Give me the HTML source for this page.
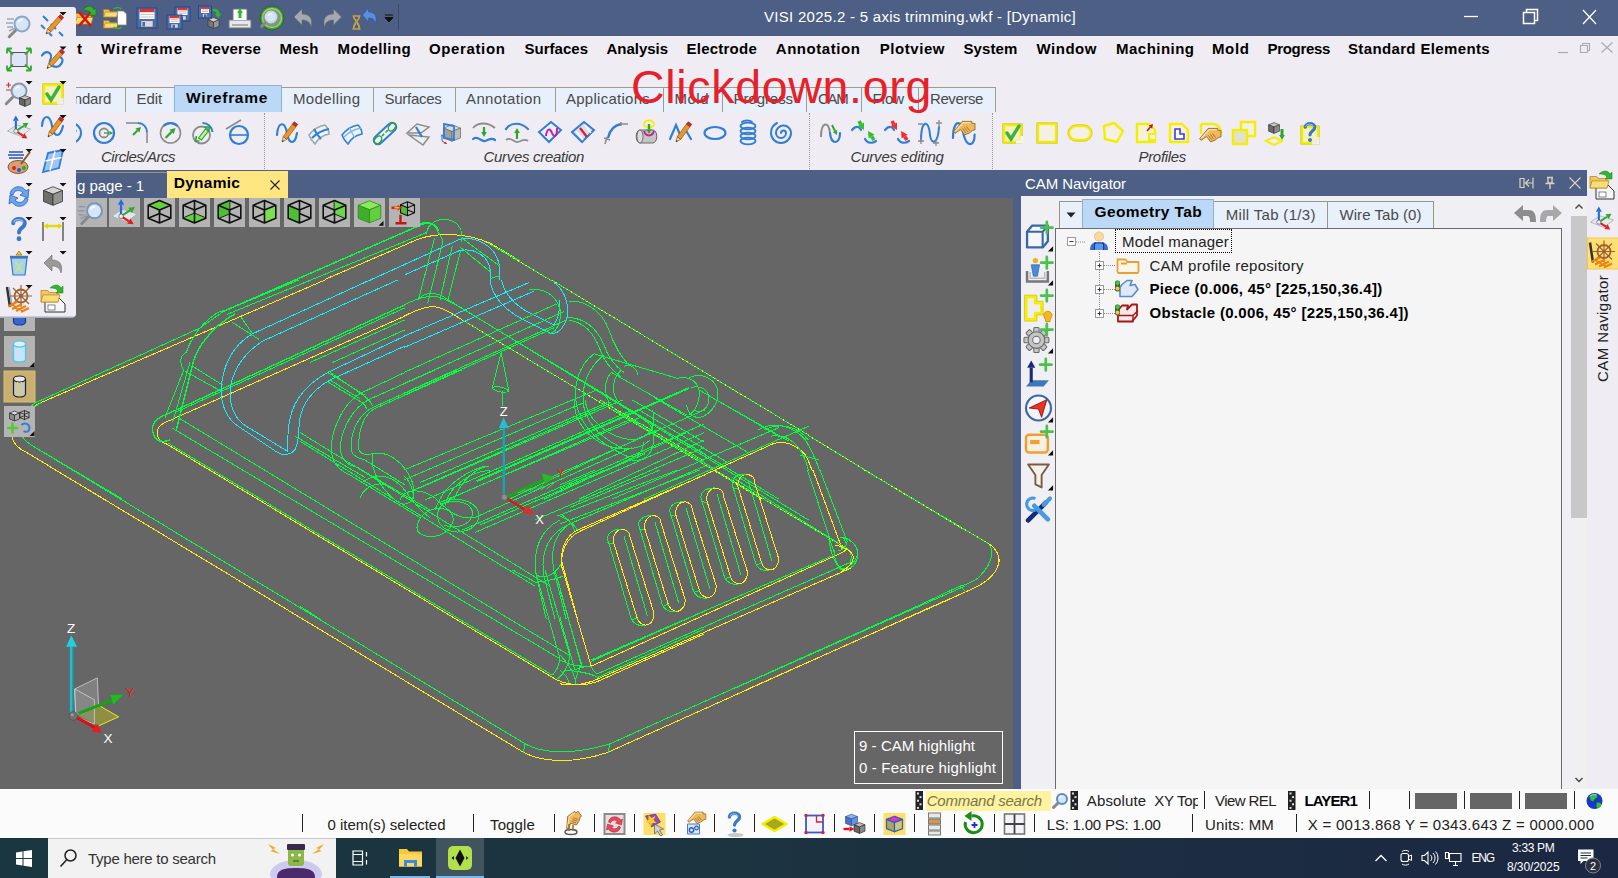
<!DOCTYPE html>
<html><head><meta charset="utf-8"><title>VISI 2025.2 - 5 axis trimming.wkf - [Dynamic]</title>
<style>
html,body{margin:0;padding:0;width:1618px;height:878px;overflow:hidden;background:#666;}
body{font-family:"Liberation Sans",sans-serif;position:relative;}
.t{position:absolute;white-space:nowrap;margin:0;padding:0;}
.r{position:absolute;margin:0;padding:0;}
svg{overflow:visible;}
</style></head><body>
<div class="r" style="left:0px;top:0px;width:1618px;height:36px;background:#4d5f84;"></div>
<div class="t" style="left:764.00px;top:6.80px;font-size:15px;line-height:20px;letter-spacing:0.283px;color:#fff;">VISI 2025.2 - 5 axis trimming.wkf - [Dynamic]</div>
<svg class="r" style="left:1455px;top:0px;" width="163" height="36" viewBox="0 0 163 36"><path d="M9 16.5h14" stroke="#fff" stroke-width="1.3" fill="none"/><path d="M68.5 12.5h11v11h-11z M71.5 12.5v-3h11v11h-3" stroke="#fff" stroke-width="1.5" fill="none"/><path d="M128 10l13 14M141 10l-13 14" stroke="#fff" stroke-width="1.3" fill="none"/></svg>
<div class="r" style="left:0px;top:36px;width:1618px;height:134px;background:#efedf3;"></div>
<div class="t" style="left:52.00px;top:38.80px;font-size:15px;line-height:20px;letter-spacing:0.542px;font-weight:bold;">Edit</div>
<div class="t" style="left:101.00px;top:38.80px;font-size:15px;line-height:20px;letter-spacing:0.975px;font-weight:bold;">Wireframe</div>
<div class="t" style="left:201.50px;top:38.80px;font-size:15px;line-height:20px;letter-spacing:0.160px;font-weight:bold;">Reverse</div>
<div class="t" style="left:279.50px;top:38.80px;font-size:15px;line-height:20px;letter-spacing:0.227px;font-weight:bold;">Mesh</div>
<div class="t" style="left:337.50px;top:38.80px;font-size:15px;line-height:20px;letter-spacing:0.390px;font-weight:bold;">Modelling</div>
<div class="t" style="left:429.00px;top:38.80px;font-size:15px;line-height:20px;letter-spacing:0.629px;font-weight:bold;">Operation</div>
<div class="t" style="left:524.50px;top:38.80px;font-size:15px;line-height:20px;letter-spacing:0.016px;font-weight:bold;">Surfaces</div>
<div class="t" style="left:606.50px;top:38.80px;font-size:15px;line-height:20px;letter-spacing:-0.025px;font-weight:bold;">Analysis</div>
<div class="t" style="left:686.50px;top:38.80px;font-size:15px;line-height:20px;letter-spacing:0.238px;font-weight:bold;">Electrode</div>
<div class="t" style="left:775.75px;top:38.80px;font-size:15px;line-height:20px;letter-spacing:0.560px;font-weight:bold;">Annotation</div>
<div class="t" style="left:879.75px;top:38.80px;font-size:15px;line-height:20px;letter-spacing:0.550px;font-weight:bold;">Plotview</div>
<div class="t" style="left:963.50px;top:38.80px;font-size:15px;line-height:20px;letter-spacing:0.106px;font-weight:bold;">System</div>
<div class="t" style="left:1036.50px;top:38.80px;font-size:15px;line-height:20px;letter-spacing:0.525px;font-weight:bold;">Window</div>
<div class="t" style="left:1116.00px;top:38.80px;font-size:15px;line-height:20px;letter-spacing:0.482px;font-weight:bold;">Machining</div>
<div class="t" style="left:1212.00px;top:38.80px;font-size:15px;line-height:20px;letter-spacing:0.628px;font-weight:bold;">Mold</div>
<div class="t" style="left:1267.50px;top:38.80px;font-size:15px;line-height:20px;letter-spacing:-0.316px;font-weight:bold;">Progress</div>
<div class="t" style="left:1348.00px;top:38.80px;font-size:15px;line-height:20px;letter-spacing:0.360px;font-weight:bold;">Standard Elements</div>
<svg class="r" style="left:1550px;top:38px;" width="68" height="20" viewBox="0 0 68 20"><path d="M8 14.5h10" stroke="#aaa" stroke-width="1.2" fill="none"/><path d="M30.5 7.5h7v7h-7z M32.5 7.5v-2h7v7h-2" stroke="#aaa" stroke-width="1.1" fill="none"/><path d="M51.5 4.5l11 10M62.5 4.5l-11 10" stroke="#aaa" stroke-width="1.1" fill="none"/></svg>
<div class="r" style="left:40px;top:87px;width:956px;height:25px;background:#e7f0fb;border-top:1px solid #a09c8c;border-right:1px solid #a09c8c;box-sizing:border-box;"></div>
<div class="r" style="left:40px;top:88px;width:1px;height:24px;background:#a09c8c;"></div>
<div class="t" style="left:52.00px;top:89.30px;font-size:15px;line-height:20px;letter-spacing:-0.235px;color:#4a4a4a;">Standard</div>
<div class="r" style="left:124.5px;top:88px;width:1px;height:24px;background:#a09c8c;"></div>
<div class="t" style="left:136.50px;top:89.30px;font-size:15px;line-height:20px;letter-spacing:-0.087px;color:#4a4a4a;">Edit</div>
<div class="r" style="left:281px;top:88px;width:1px;height:24px;background:#a09c8c;"></div>
<div class="t" style="left:293.00px;top:89.30px;font-size:15px;line-height:20px;letter-spacing:0.366px;color:#4a4a4a;">Modelling</div>
<div class="r" style="left:372.5px;top:88px;width:1px;height:24px;background:#a09c8c;"></div>
<div class="t" style="left:384.50px;top:89.30px;font-size:15px;line-height:20px;letter-spacing:-0.274px;color:#4a4a4a;">Surfaces</div>
<div class="r" style="left:454.5px;top:88px;width:1px;height:24px;background:#a09c8c;"></div>
<div class="t" style="left:466.00px;top:89.30px;font-size:15px;line-height:20px;letter-spacing:0.377px;color:#4a4a4a;">Annotation</div>
<div class="r" style="left:554.5px;top:88px;width:1px;height:24px;background:#a09c8c;"></div>
<div class="t" style="left:566.00px;top:89.30px;font-size:15px;line-height:20px;letter-spacing:0.260px;color:#4a4a4a;">Applications</div>
<div class="r" style="left:662.75px;top:88px;width:1px;height:24px;background:#a09c8c;"></div>
<div class="t" style="left:674.50px;top:89.30px;font-size:15px;line-height:20px;letter-spacing:0.497px;color:#4a4a4a;">Mold</div>
<div class="r" style="left:721.75px;top:88px;width:1px;height:24px;background:#a09c8c;"></div>
<div class="t" style="left:733.50px;top:89.30px;font-size:15px;line-height:20px;letter-spacing:-0.065px;color:#4a4a4a;">Progress</div>
<div class="r" style="left:805.75px;top:88px;width:1px;height:24px;background:#a09c8c;"></div>
<div class="t" style="left:818.00px;top:89.30px;font-size:15px;line-height:20px;letter-spacing:-1.278px;color:#4a4a4a;">CAM</div>
<div class="r" style="left:860.5px;top:88px;width:1px;height:24px;background:#a09c8c;"></div>
<div class="t" style="left:872.50px;top:89.30px;font-size:15px;line-height:20px;letter-spacing:-0.042px;color:#4a4a4a;">Flow</div>
<div class="r" style="left:917.5px;top:88px;width:1px;height:24px;background:#a09c8c;"></div>
<div class="t" style="left:930.00px;top:89.30px;font-size:15px;line-height:20px;letter-spacing:-0.408px;color:#4a4a4a;">Reverse</div>
<div class="r" style="left:174px;top:85px;width:108px;height:27px;background:#bbd8f7;border:1px solid #8fb0d8;border-bottom:none;box-sizing:border-box;"></div>
<div class="t" style="left:186.00px;top:87.63px;font-size:15.5px;line-height:20px;letter-spacing:0.704px;font-weight:bold;">Wireframe</div>
<div class="t" style="left:631.00px;top:56.89px;font-size:46.5px;line-height:60px;letter-spacing:0.690px;color:#e8202a;">Clickdown.org</div>
<div class="r" style="left:264px;top:113px;width:0px;height:56px;background:none;border-left:1px dotted #999;"></div>
<div class="r" style="left:809px;top:113px;width:0px;height:56px;background:none;border-left:1px dotted #999;"></div>
<div class="r" style="left:992px;top:113px;width:0px;height:56px;background:none;border-left:1px dotted #999;"></div>
<div class="t" style="left:101.00px;top:146.80px;font-size:15px;line-height:20px;letter-spacing:-0.500px;font-style:italic;color:#3a3a3a;">Circles/Arcs</div>
<div class="t" style="left:483.50px;top:146.80px;font-size:15px;line-height:20px;letter-spacing:-0.303px;font-style:italic;color:#3a3a3a;">Curves creation</div>
<div class="t" style="left:850.50px;top:146.80px;font-size:15px;line-height:20px;letter-spacing:-0.188px;font-style:italic;color:#3a3a3a;">Curves editing</div>
<div class="t" style="left:1138.50px;top:146.80px;font-size:15px;line-height:20px;letter-spacing:-0.315px;font-style:italic;color:#3a3a3a;">Profiles</div>
<div class="r" style="left:0px;top:170px;width:1618px;height:28px;background:#4d5f84;"></div>
<div class="r" style="left:76px;top:172px;width:92px;height:1px;background:#9a957a;"></div>
<div class="t" style="left:77.00px;top:175.80px;font-size:15px;line-height:20px;letter-spacing:-0.055px;color:#fff;">g page - 1</div>
<div class="r" style="left:167px;top:171px;width:121px;height:27px;background:#ffe680;"></div>
<div class="t" style="left:173.75px;top:173.38px;font-size:15.5px;line-height:20px;letter-spacing:0.270px;font-weight:bold;">Dynamic</div>
<svg class="r" style="left:268px;top:178px;" width="14" height="14" viewBox="0 0 14 14"><path d="M2.5 2.5l9 9M11.5 2.5l-9 9" stroke="#222" stroke-width="1.1" fill="none"/></svg>
<div class="r" style="left:0px;top:198px;width:1013px;height:591px;background:#666;"></div>
<div class="r" style="left:1021px;top:196px;width:566px;height:593px;background:#f0eff4;"></div>
<div class="r" style="left:1587px;top:170px;width:31px;height:619px;background:#efedf3;"></div>
<div class="t" style="left:1025.00px;top:173.55px;font-size:15px;line-height:20px;letter-spacing:-0.054px;color:#fff;">CAM Navigator</div>
<svg class="r" style="left:1515px;top:174px;" width="70" height="18" viewBox="0 0 70 18"><path d="M5 4.5h4v9h-4z M18 3.5v11 M10.5 9h7 M14 5.5l-3.5 3.5l3.5 3.5" stroke="#d8d4bc" stroke-width="1.2" fill="none"/><path d="M32 3.5h6 M33 4v5h4v-5 M30.5 9.5h9 M35 9.5v5.5" stroke="#d8d4bc" stroke-width="1.4" fill="none"/><path d="M54.5 3.5l11 11M65.5 3.5l-11 11" stroke="#d8d4bc" stroke-width="1.1" fill="none"/></svg>
<div class="r" style="left:1059px;top:201px;width:375px;height:27px;background:#e7f0fb;border:1px solid #9a9684;border-bottom:none;box-sizing:border-box;"></div>
<div class="r" style="left:1327px;top:202px;width:1px;height:26px;background:#9a9684;"></div>
<div class="r" style="left:1082px;top:199px;width:132px;height:29px;background:#bbd8f7;border:1px solid #8fb0d8;border-bottom:none;box-sizing:border-box;"></div>
<svg class="r" style="left:1064px;top:210px;" width="14" height="10" viewBox="0 0 14 10"><path d="M2.5 2.5h9l-4.5 5z" fill="#222"/></svg>
<div class="t" style="left:1094.50px;top:202.13px;font-size:15.5px;line-height:20px;letter-spacing:0.369px;font-weight:bold;">Geometry Tab</div>
<div class="t" style="left:1225.75px;top:204.80px;font-size:15px;line-height:20px;letter-spacing:0.315px;color:#4a4a4a;">Mill Tab (1/3)</div>
<div class="t" style="left:1339.50px;top:204.80px;font-size:15px;line-height:20px;letter-spacing:0.049px;color:#4a4a4a;">Wire Tab (0)</div>
<div class="r" style="left:1055px;top:228px;width:507px;height:561px;background:#f5f5f5;border:1px solid #6a6a6a;border-bottom:none;box-sizing:border-box;"></div>
<div class="r" style="left:1115px;top:229px;width:117px;height:24px;background:none;border:1px dotted #000;box-sizing:border-box;"></div>
<div class="t" style="left:1122.00px;top:231.80px;font-size:15px;line-height:20px;letter-spacing:0.214px;color:#222;">Model manager</div>
<div class="t" style="left:1149.50px;top:256.00px;font-size:15px;line-height:20px;letter-spacing:0.267px;color:#222;">CAM profile repository</div>
<div class="t" style="left:1149.50px;top:279.30px;font-size:15px;line-height:20px;letter-spacing:0.283px;font-weight:bold;">Piece (0.006, 45° [225,150,36.4])</div>
<div class="t" style="left:1149.50px;top:303.00px;font-size:15px;line-height:20px;letter-spacing:0.318px;font-weight:bold;">Obstacle (0.006, 45° [225,150,36.4])</div>
<svg class="r" style="left:0px;top:0px;pointer-events:none;" width="1618" height="878" viewBox="0 0 1618 878"><path d="M1076 242h10 M1099.5 252v62 M1104 265.5h12 M1104 289.5h12 M1104 313.5h12" stroke="#888" stroke-width="1" stroke-dasharray="1 1" fill="none"/><rect x="1067.5" y="237.5" width="8" height="8" fill="#fff" stroke="#999"/><path d="M1069.5 241.5h4" stroke="#335"/><rect x="1095.5" y="261.5" width="8" height="8" fill="#fff" stroke="#999"/><path d="M1097.5 265.5h4M1099.5 263.5v4" stroke="#335"/><rect x="1095.5" y="285.5" width="8" height="8" fill="#fff" stroke="#999"/><path d="M1097.5 289.5h4M1099.5 287.5v4" stroke="#335"/><rect x="1095.5" y="309.5" width="8" height="8" fill="#fff" stroke="#999"/><path d="M1097.5 313.5h4M1099.5 311.5v4" stroke="#335"/></svg>
<div class="r" style="left:1571px;top:199px;width:16px;height:590px;background:#f0f0f0;"></div>
<div class="r" style="left:1571px;top:216px;width:16px;height:302px;background:#c8c8c8;"></div>
<svg class="r" style="left:1571px;top:199px;" width="16" height="590" viewBox="0 0 16 590"><path d="M4.5 9.5l3.5-3.5l3.5 3.5 M4.5 579l3.5 3.5l3.5-3.5" stroke="#444" stroke-width="1.4" fill="none"/></svg>
<div class="t" style="left:1594px;top:382px;font-size:15px;line-height:18px;transform-origin:0 0;transform:rotate(-90deg);letter-spacing:0.42px;color:#222">CAM Navigator</div>
<div class="r" style="left:0px;top:789px;width:1618px;height:49px;background:#fbfbfb;"></div>
<div class="r" style="left:302px;top:814px;width:1px;height:18px;background:#222;"></div>
<div class="r" style="left:473px;top:814px;width:1px;height:18px;background:#222;"></div>
<div class="r" style="left:554px;top:814px;width:1px;height:18px;background:#222;"></div>
<div class="r" style="left:594px;top:814px;width:1px;height:18px;background:#222;"></div>
<div class="r" style="left:634px;top:814px;width:1px;height:18px;background:#222;"></div>
<div class="r" style="left:674px;top:814px;width:1px;height:18px;background:#222;"></div>
<div class="r" style="left:714px;top:814px;width:1px;height:18px;background:#222;"></div>
<div class="r" style="left:754px;top:814px;width:1px;height:18px;background:#222;"></div>
<div class="r" style="left:794px;top:814px;width:1px;height:18px;background:#222;"></div>
<div class="r" style="left:834px;top:814px;width:1px;height:18px;background:#222;"></div>
<div class="r" style="left:874px;top:814px;width:1px;height:18px;background:#222;"></div>
<div class="r" style="left:914px;top:814px;width:1px;height:18px;background:#222;"></div>
<div class="r" style="left:954px;top:814px;width:1px;height:18px;background:#222;"></div>
<div class="r" style="left:994px;top:814px;width:1px;height:18px;background:#222;"></div>
<div class="r" style="left:1034px;top:814px;width:1px;height:18px;background:#222;"></div>
<div class="r" style="left:1192px;top:814px;width:1px;height:18px;background:#222;"></div>
<div class="r" style="left:1296px;top:814px;width:1px;height:18px;background:#222;"></div>
<div class="r" style="left:1204px;top:791px;width:1px;height:18px;background:#222;"></div>
<div class="r" style="left:1369px;top:791px;width:1px;height:18px;background:#222;"></div>
<div class="r" style="left:1409px;top:791px;width:1px;height:18px;background:#222;"></div>
<div class="r" style="left:1464px;top:791px;width:1px;height:18px;background:#222;"></div>
<div class="r" style="left:1519px;top:791px;width:1px;height:18px;background:#222;"></div>
<div class="r" style="left:1574px;top:791px;width:1px;height:18px;background:#222;"></div>
<div class="t" style="left:327.50px;top:814.80px;font-size:15px;line-height:20px;letter-spacing:-0.021px;color:#222;">0 item(s) selected</div>
<div class="t" style="left:490.00px;top:814.80px;font-size:15px;line-height:20px;letter-spacing:0.133px;color:#222;">Toggle</div>
<div class="t" style="left:1046.75px;top:814.80px;font-size:15px;line-height:20px;letter-spacing:-0.211px;color:#222;">LS: 1.00 PS: 1.00</div>
<div class="t" style="left:1205.00px;top:814.80px;font-size:15px;line-height:20px;letter-spacing:0.167px;color:#222;">Units: MM</div>
<div class="t" style="left:1307.75px;top:814.80px;font-size:15px;line-height:20px;letter-spacing:0.278px;color:#222;">X = 0013.868 Y = 0343.643 Z = 0000.000</div>
<div class="r" style="left:926px;top:791px;width:125px;height:20px;background:#fff2a0;"></div>
<div class="t" style="left:926.75px;top:791.05px;font-size:15px;line-height:20px;letter-spacing:-0.242px;font-style:italic;color:#77774a;">Command search</div>
<div class="t" style="left:1086.75px;top:791.05px;font-size:15px;line-height:20px;letter-spacing:0.141px;color:#222;">Absolute</div>
<div class="t" style="left:1154.25px;top:791.05px;font-size:15px;line-height:20px;letter-spacing:-0.303px;color:#222;width:43.5px;overflow:hidden;">XY Top</div>
<div class="t" style="left:1215.00px;top:791.05px;font-size:15px;line-height:20px;letter-spacing:-0.574px;color:#222;">View REL</div>
<div class="t" style="left:1304.50px;top:791.05px;font-size:15px;line-height:20px;letter-spacing:-0.884px;font-weight:bold;">LAYER1</div>
<div class="r" style="left:1415px;top:793px;width:42px;height:16px;background:#666;"></div>
<div class="r" style="left:1470px;top:793px;width:42px;height:16px;background:#666;"></div>
<div class="r" style="left:1525px;top:793px;width:42px;height:16px;background:#666;"></div>
<svg class="r" style="left:0px;top:0px;pointer-events:none;" width="1618" height="878" viewBox="0 0 1618 878"><rect x="915.5" y="791" width="7.5" height="19" fill="#222"/><rect x="917.0" y="792.5" width="2" height="2" fill="#ddd"/><rect x="919.5" y="796.1" width="2" height="2" fill="#ddd"/><rect x="917.0" y="799.7" width="2" height="2" fill="#ddd"/><rect x="919.5" y="803.3" width="2" height="2" fill="#ddd"/><rect x="917.0" y="806.9" width="2" height="2" fill="#ddd"/><rect x="1070.5" y="791" width="7.5" height="19" fill="#222"/><rect x="1072.0" y="792.5" width="2" height="2" fill="#ddd"/><rect x="1074.5" y="796.1" width="2" height="2" fill="#ddd"/><rect x="1072.0" y="799.7" width="2" height="2" fill="#ddd"/><rect x="1074.5" y="803.3" width="2" height="2" fill="#ddd"/><rect x="1072.0" y="806.9" width="2" height="2" fill="#ddd"/><rect x="1288" y="791" width="7.5" height="19" fill="#222"/><rect x="1289.5" y="792.5" width="2" height="2" fill="#ddd"/><rect x="1292.0" y="796.1" width="2" height="2" fill="#ddd"/><rect x="1289.5" y="799.7" width="2" height="2" fill="#ddd"/><rect x="1292.0" y="803.3" width="2" height="2" fill="#ddd"/><rect x="1289.5" y="806.9" width="2" height="2" fill="#ddd"/></svg>
<div class="r" style="left:0px;top:838px;width:1618px;height:40px;background:linear-gradient(90deg,#1a3640 0%,#1c3440 40%,#1c2f40 65%,#1b2743 100%);"></div>
<div class="r" style="left:48px;top:838px;width:288px;height:40px;background:#f2f2f2;border-top:1px solid #c8c8c8;box-sizing:border-box;"></div>
<div class="t" style="left:88.00px;top:848.55px;font-size:15px;line-height:20px;letter-spacing:-0.254px;color:#333;">Type here to search</div>
<div class="r" style="left:436px;top:838px;width:48px;height:40px;background:rgba(255,255,255,0.16);"></div>
<div class="r" style="left:390px;top:876px;width:40px;height:2px;background:#76b9ed;"></div>
<div class="r" style="left:436px;top:876px;width:48px;height:2px;background:#76b9ed;"></div>
<div class="t" style="left:1471.50px;top:849.84px;font-size:12px;line-height:16px;letter-spacing:-1.168px;color:#fff;">ENG</div>
<div class="t" style="left:1512.00px;top:840.34px;font-size:12px;line-height:16px;letter-spacing:-0.313px;color:#fff;">3:33 PM</div>
<div class="t" style="left:1507.00px;top:858.59px;font-size:12px;line-height:16px;letter-spacing:-0.098px;color:#fff;">8/30/2025</div>
<div class="r" style="left:1013px;top:198px;width:8px;height:591px;background:#4d5f84;"></div>
<svg class="r" style="left:0;top:198px;overflow:hidden" width="1013" height="591" viewBox="0 198 1013 591"><g fill="none" stroke-linecap="butt" shape-rendering="crispEdges"><path d="M 12.0 436.2 C 12.5 425.0 25.0 410.0 41.2 402.5 L 325.0 280.0" stroke="#ffee10" stroke-width="1"/><path d="M 12.0 436.2 C 13.0 445.0 20.0 449.5 27.5 453.0 L 103.8 499.2" stroke="#ffee10" stroke-width="1"/><path d="M 18.8 427.5 C 21.2 416.2 27.5 408.0 35.0 403.0 L 200.0 328.0 L 223.8 311.2" stroke="#00ff3c" stroke-width="1"/><path d="M 18.8 427.5 C 20.0 436.2 25.0 441.2 31.2 445.0 L 122.5 499.2" stroke="#00ff3c" stroke-width="1"/><path d="M 25.0 420.0 C 28.8 411.2 35.0 406.2 41.2 402.5" stroke="#00ff3c" stroke-width="1"/><path d="M 404.5 316.2 L 165.0 422.5 C 157.5 426.2 155.0 432.5 158.8 438.8 C 161.2 442.5 163.8 443.0 166.2 443.8" stroke="#ffee10" stroke-width="1"/><path d="M 404.5 305.0 L 162.5 416.2 C 153.8 420.0 150.0 427.5 153.8 435.0 C 156.2 441.2 162.5 442.5 170.0 440.0" stroke="#00ff3c" stroke-width="1.3"/><path d="M 404.5 308.0 L 175.0 412.5" stroke="#00ff3c" stroke-width="1"/><path d="M 226.2 310.5 L 220.0 311.2 C 205.0 320.0 192.5 335.0 186.2 352.5 C 180.5 355.0 178.8 362.5 183.8 370.0 L 165.0 417.5" stroke="#00ff3c" stroke-width="1"/><path d="M 235.0 313.8 C 215.0 325.0 200.0 342.5 193.8 360.0 L 176.2 430.0" stroke="#00ff3c" stroke-width="1.4"/><path d="M 190.0 362.5 L 172.5 422.5" stroke="#00ff3c" stroke-width="1"/><path d="M 192.5 366.2 L 222.5 385.0" stroke="#00ff3c" stroke-width="1"/><path d="M 185.0 371.2 L 221.2 391.2" stroke="#00ff3c" stroke-width="1"/><path d="M 232.5 322.5 L 258.8 339.2" stroke="#00ff3c" stroke-width="1"/><path d="M 241.2 317.5 L 252.5 333.8" stroke="#00ff3c" stroke-width="1"/><path d="M 370.0 280.0 L 252.5 333.8 C 232.5 345.0 221.2 367.5 221.2 392.5 C 222.0 410.0 230.0 421.2 240.0 427.5 L 277.5 452.5 C 283.8 456.2 291.2 455.0 295.5 448.8 C 298.8 442.5 298.8 432.5 299.2 422.5 C 301.2 405.0 312.5 390.0 330.0 380.0 L 404.5 346.2" stroke="#10f0ff" stroke-width="1"/><path d="M 397.5 280.0 L 262.5 341.2 C 241.2 355.0 230.0 375.0 230.0 395.0 C 230.5 410.0 237.5 421.2 246.2 426.2 L 287.5 451.2 C 287.5 440.0 287.5 430.0 290.0 418.8 C 293.8 400.0 307.5 383.8 327.5 372.5 L 404.5 336.2" stroke="#10f0ff" stroke-width="1"/><path d="M 295.0 436.2 L 365.0 477.5" stroke="#00ff3c" stroke-width="1"/><path d="M 327.5 372.5 L 365.0 395.0" stroke="#00ff3c" stroke-width="1"/><path d="M 330.0 380.0 L 360.0 398.8" stroke="#00ff3c" stroke-width="1"/><path d="M 298.8 280.0 L 223.8 311.2" stroke="#00ff3c" stroke-width="1"/><path d="M 404.5 320.0 L 310.0 362.5" stroke="#00ff3c" stroke-width="1"/><path d="M 404.5 330.0 L 332.5 362.5" stroke="#00ff3c" stroke-width="1"/><path d="M 551.5 280.0 L 808.5 435.0" stroke="#00ff3c" stroke-width="1"/><path d="M 551.5 280.0 L 808.5 435.0" stroke="#ffee10" stroke-width="1" stroke-dasharray="1.5 3"/><path d="M 404.0 316.2 C 419.0 308.8 429.0 305.0 439.0 307.5 C 449.0 311.2 454.0 315.0 461.5 319.5" stroke="#ffee10" stroke-width="1"/><path d="M 461.5 319.5 L 762.0 499.2" stroke="#00ff3c" stroke-width="1"/><path d="M 461.5 319.5 L 762.0 499.2" stroke="#ffee10" stroke-width="1" stroke-dasharray="1.5 2.5"/><path d="M 404.0 305.0 C 416.5 298.8 426.5 295.0 437.8 297.0 C 447.8 299.5 454.0 303.8 460.2 307.5 L 779.0 499.2" stroke="#00ff3c" stroke-width="1"/><path d="M 419.0 298.8 C 424.0 292.5 436.5 291.2 446.5 298.8 L 808.5 520.0" stroke="#00ff3c" stroke-width="1"/><path d="M 404.0 336.2 L 529.0 282.5" stroke="#10f0ff" stroke-width="1"/><path d="M 404.0 347.5 L 534.0 291.2" stroke="#10f0ff" stroke-width="1"/><path d="M 490.2 280.0 C 491.5 295.0 504.0 310.0 524.0 320.0 L 551.5 333.8 C 559.0 333.8 566.5 325.0 567.8 312.5 C 567.8 300.0 564.0 290.0 554.0 282.5" stroke="#10f0ff" stroke-width="1"/><path d="M 501.5 280.0 C 504.0 292.5 514.0 305.0 529.0 312.5 L 554.0 325.0 C 559.0 317.5 560.2 310.0 559.0 300.0" stroke="#10f0ff" stroke-width="1"/><path d="M 404.0 372.5 L 556.5 304.0" stroke="#00ff3c" stroke-width="1"/><path d="M 404.0 383.5 L 564.0 311.5" stroke="#00ff3c" stroke-width="1"/><path d="M 404.0 393.2 L 566.5 320.0" stroke="#00ff3c" stroke-width="1"/><path d="M 404.0 395.2 L 554.0 327.8" stroke="#00ff3c" stroke-width="1"/><path d="M 529.0 290.0 C 544.0 287.5 556.5 295.0 560.2 310.0 C 561.5 322.5 556.5 332.5 549.0 333.8" stroke="#00ff3c" stroke-width="1"/><path d="M 569.0 301.2 C 584.0 300.0 601.5 310.0 609.0 330.0 C 614.0 345.0 619.0 355.0 629.0 365.0" stroke="#00ff3c" stroke-width="1"/><path d="M 566.5 317.5 C 584.0 317.5 596.5 327.5 604.0 345.0 C 607.8 357.5 614.0 365.0 624.0 372.5" stroke="#00ff3c" stroke-width="1"/><path d="M 569.0 320.0 C 584.0 322.5 594.0 332.5 600.2 350.0 C 604.0 362.5 611.5 370.0 621.5 377.5" stroke="#00ff3c" stroke-width="1"/><path d="M 624.0 366.2 C 630.2 363.8 636.5 367.5 637.8 375.0" stroke="#00ff3c" stroke-width="1"/><path d="M 594.0 353.8 C 579.0 365.0 572.8 385.0 576.5 405.0 C 581.5 427.5 599.0 442.5 624.0 455.0 C 634.0 460.0 641.5 455.0 644.0 442.5" stroke="#00ff3c" stroke-width="1"/><path d="M 604.0 355.0 C 587.8 367.5 580.2 387.5 584.0 407.5 C 589.0 427.5 604.0 440.0 626.5 450.0" stroke="#00ff3c" stroke-width="1"/><path d="M 611.5 372.5 C 604.0 380.0 604.0 392.5 609.0 402.5 C 616.5 412.5 629.0 420.0 644.0 425.0" stroke="#00ff3c" stroke-width="1"/><path d="M 621.5 370.0 C 611.5 378.8 611.5 392.5 617.8 401.2" stroke="#00ff3c" stroke-width="1"/><path d="M 644.0 420.0 C 654.0 425.0 656.5 437.5 651.5 450.0 C 646.5 460.0 636.5 462.5 629.0 458.8" stroke="#00ff3c" stroke-width="1"/><path d="M 594.0 353.8 L 679.0 378.8" stroke="#00ff3c" stroke-width="1"/><path d="M 611.5 372.5 L 686.5 415.0" stroke="#00ff3c" stroke-width="1"/><path d="M 676.5 378.8 C 686.5 375.0 696.5 380.0 699.0 390.0 C 700.2 400.0 696.5 410.0 689.0 415.0" stroke="#00ff3c" stroke-width="1"/><path d="M 689.0 377.5 C 701.5 372.5 714.0 377.5 717.8 390.0 C 719.0 402.5 711.5 415.0 699.0 417.5 C 691.5 417.5 687.8 412.5 686.5 405.0" stroke="#00ff3c" stroke-width="1"/><path d="M 691.5 387.5 C 701.5 385.0 709.0 390.0 709.0 400.0 C 707.8 410.0 699.0 413.8 694.0 410.0" stroke="#00ff3c" stroke-width="1"/><path d="M 476.5 481.2 L 689.0 388.0" stroke="#00ff3c" stroke-width="2"/><path d="M 404.0 470.0 L 596.5 390.0" stroke="#00ff3c" stroke-width="1"/><path d="M 414.0 490.0 L 611.5 402.5" stroke="#00ff3c" stroke-width="1"/><path d="M 449.0 499.2 L 629.0 420.0" stroke="#00ff3c" stroke-width="1"/><path d="M 404.0 480.0 L 584.0 402.5" stroke="#00ff3c" stroke-width="1"/><path d="M 544.0 499.2 L 686.5 432.5" stroke="#00ff3c" stroke-width="1"/><path d="M 579.0 499.2 L 704.0 440.0" stroke="#00ff3c" stroke-width="1"/><path d="M 509.0 499.2 L 656.5 430.0" stroke="#00ff3c" stroke-width="1"/><path d="M 639.0 410.0 L 726.5 461.8" stroke="#00ff3c" stroke-width="1"/><path d="M 624.0 416.2 L 716.5 470.0" stroke="#00ff3c" stroke-width="1"/><path d="M 654.0 397.5 L 749.0 453.0" stroke="#00ff3c" stroke-width="1"/><path d="M 716.5 400.0 L 789.0 441.2" stroke="#00ff3c" stroke-width="1"/><path d="M 699.0 390.0 L 779.0 436.2" stroke="#00ff3c" stroke-width="1"/><path d="M 644.0 499.2 L 808.5 426.2" stroke="#00ff3c" stroke-width="1"/><path d="M 611.5 499.2 L 779.0 427.5" stroke="#00ff3c" stroke-width="1"/><path d="M 764.0 430.0 C 779.0 422.5 796.5 425.0 808.5 440.0" stroke="#00ff3c" stroke-width="1"/><path d="M 404.0 476.2 C 409.0 480.0 412.8 487.5 414.0 499.2" stroke="#00ff3c" stroke-width="1"/><path d="M 454.0 499.2 C 461.5 480.0 476.5 467.5 489.0 466.2" stroke="#00ff3c" stroke-width="1"/><path d="M 773.0 443.8 C 783.0 440.0 795.5 443.8 805.5 455.0 C 808.8 461.2 810.5 466.2 812.5 471.2" stroke="#ffee10" stroke-width="1"/><path d="M 758.0 430.0 C 773.0 421.2 793.0 425.0 805.5 440.0 C 811.8 450.0 816.8 462.5 820.0 471.2" stroke="#00ff3c" stroke-width="1"/><path d="M 770.5 436.2 C 783.0 433.8 795.5 440.0 803.0 455.0 C 806.0 461.2 807.5 466.2 808.8 471.2" stroke="#00ff3c" stroke-width="1"/><path d="M 800.5 455.0 L 819.2 460.0" stroke="#00ff3c" stroke-width="1"/><path d="M 808.0 435.2 L 913.0 499.2" stroke="#00ff3c" stroke-width="1"/><path d="M 808.0 435.2 L 913.0 499.2" stroke="#ffee10" stroke-width="1" stroke-dasharray="1.5 3"/><path d="M 223.9 311.2 L 422.4 224.2 C 430.5 221.5 436.0 224.2 438.7 231.0" stroke="#00ff3c" stroke-width="1.5"/><path d="M 226.6 314.6 L 426.4 232.6" stroke="#00ff3c" stroke-width="1"/><path d="M 325.0 279.4 L 418.3 239.1 C 436.0 233.0 463.2 231.7 490.3 243.2 L 520.0 260.9" stroke="#ffee10" stroke-width="1"/><path d="M 370.0 280.2 L 460.4 239.1 C 476.8 236.4 495.8 245.9 499.2 265.0 L 499.9 280.2" stroke="#10f0ff" stroke-width="1"/><path d="M 404.7 274.8 L 459.1 250.7 C 475.4 247.3 489.0 256.8 490.3 270.4 L 491.0 280.2" stroke="#10f0ff" stroke-width="1"/><path d="M 434.6 237.8 L 418.3 300.3" stroke="#00ff3c" stroke-width="1"/><path d="M 442.8 241.9 L 427.8 303.1" stroke="#00ff3c" stroke-width="1"/><path d="M 452.3 245.9 L 440.0 300.3" stroke="#00ff3c" stroke-width="1"/><path d="M 460.4 251.4 L 448.2 299.0" stroke="#00ff3c" stroke-width="1"/><path d="M 426.4 233.7 C 427.8 222.8 438.7 217.4 449.6 220.1 C 459.1 222.8 463.2 231.0 461.8 241.9" stroke="#00ff3c" stroke-width="1"/><path d="M 419.6 224.2 C 426.4 220.1 434.6 222.8 437.3 231.0 C 441.4 236.4 442.8 239.1 442.8 241.9" stroke="#00ff3c" stroke-width="1"/><path d="M 460.4 247.3 L 490.3 271.8" stroke="#00ff3c" stroke-width="1"/><path d="M 463.2 239.1 L 499.9 266.3" stroke="#00ff3c" stroke-width="1"/><path d="M 490.3 278.6 C 493.1 277.2 497.1 276.5 499.9 275.9" stroke="#00ff3c" stroke-width="1"/><path d="M 486.3 241.9 L 520.0 260.9" stroke="#00ff3c" stroke-width="1"/><path d="M 300.0 432.5 L 550.0 586.2" stroke="#00ff3c" stroke-width="1"/><path d="M 300.0 441.2 L 535.0 586.2" stroke="#00ff3c" stroke-width="1"/><path d="M 300.0 606.2 L 320.0 619.2" stroke="#00ff3c" stroke-width="1"/><path d="M 372.5 453.8 C 387.5 450.0 405.0 462.5 412.5 482.5 C 417.5 500.0 407.5 510.0 395.0 500.0 C 380.0 487.5 370.0 470.0 372.5 453.8" stroke="#00ff3c" stroke-width="1"/><path d="M 362.5 482.5 C 375.0 472.5 390.0 475.0 400.0 485.0 C 410.0 495.0 417.5 510.0 430.0 517.5" stroke="#00ff3c" stroke-width="1"/><path d="M 360.0 497.5 C 367.5 482.5 382.5 480.0 395.0 490.0" stroke="#00ff3c" stroke-width="1"/><path d="M 450.0 500.0 C 470.0 497.5 480.0 507.5 478.8 517.5 C 476.2 530.0 460.0 535.0 447.5 530.0 C 435.0 525.0 432.5 507.5 450.0 500.0" stroke="#00ff3c" stroke-width="1"/><path d="M 440.0 505.0 C 455.0 497.5 472.5 502.5 472.5 513.8 C 471.2 525.0 455.0 530.0 443.8 525.0" stroke="#00ff3c" stroke-width="1"/><path d="M 417.5 525.0 C 420.0 512.5 435.0 505.0 447.5 510.0 C 460.0 517.5 450.0 535.0 435.0 536.2 C 422.5 537.5 415.0 532.5 417.5 525.0" stroke="#00ff3c" stroke-width="1"/><path d="M 400.0 500.0 C 405.0 487.5 425.0 487.5 440.0 502.5 C 450.0 512.5 460.0 520.0 475.0 517.5" stroke="#00ff3c" stroke-width="1"/><path d="M 445.0 505.0 C 450.0 485.0 470.0 472.5 490.0 470.0" stroke="#00ff3c" stroke-width="1"/><path d="M 435.0 510.0 C 442.5 487.5 462.5 472.5 485.0 466.2" stroke="#00ff3c" stroke-width="1"/><path d="M 420.0 482.5 L 607.5 402.5" stroke="#00ff3c" stroke-width="1"/><path d="M 417.5 488.8 L 622.5 400.0" stroke="#00ff3c" stroke-width="1"/><path d="M 425.0 500.0 L 632.5 410.0" stroke="#00ff3c" stroke-width="1"/><path d="M 440.0 502.5 L 640.0 417.5" stroke="#00ff3c" stroke-width="1"/><path d="M 475.0 517.5 L 632.5 447.5" stroke="#00ff3c" stroke-width="1"/><path d="M 480.0 525.0 L 645.0 453.8" stroke="#00ff3c" stroke-width="1"/><path d="M 462.5 530.0 L 704.5 423.8" stroke="#00ff3c" stroke-width="1"/><path d="M 507.5 496.2 L 704.5 410.0" stroke="#00ff3c" stroke-width="1"/><path d="M 575.0 400.0 C 572.5 415.0 582.5 432.5 600.0 442.5 C 620.0 452.5 640.0 450.0 650.0 440.0" stroke="#00ff3c" stroke-width="1"/><path d="M 585.0 400.0 C 587.5 420.0 607.5 437.5 632.5 440.0 C 650.0 437.5 657.5 425.0 652.5 410.0" stroke="#00ff3c" stroke-width="1"/><path d="M 600.0 400.0 L 704.5 461.2" stroke="#00ff3c" stroke-width="1"/><path d="M 600.0 400.0 L 704.5 461.2" stroke="#ffee10" stroke-width="1" stroke-dasharray="1.5 3"/><path d="M 612.5 400.0 L 704.5 453.8" stroke="#00ff3c" stroke-width="1"/><path d="M 632.5 400.0 L 704.5 442.5" stroke="#00ff3c" stroke-width="1"/><path d="M 475.0 532.5 L 704.5 432.5" stroke="#00ff3c" stroke-width="1"/><path d="M 535.0 520.0 L 704.5 447.5" stroke="#00ff3c" stroke-width="1"/><path d="M 704.5 475.0 L 577.5 530.0 C 567.5 535.0 560.0 547.5 562.0 562.5 L 577.5 619.2" stroke="#ffee10" stroke-width="1"/><path d="M 704.5 466.2 L 570.0 523.8 C 550.0 532.5 540.0 550.0 543.8 575.0 L 555.0 619.2" stroke="#00ff3c" stroke-width="1"/><path d="M 560.0 520.0 C 540.0 530.0 532.5 550.0 536.2 575.0 L 546.2 619.2" stroke="#00ff3c" stroke-width="1"/><path d="M 570.0 523.8 C 555.0 532.5 550.0 550.0 553.8 570.0 L 566.2 619.2" stroke="#00ff3c" stroke-width="1"/><path d="M 536.2 575.0 C 545.0 580.0 555.0 575.0 562.0 562.5" stroke="#00ff3c" stroke-width="1"/><path d="M 557.5 515.0 C 565.0 517.5 572.5 522.5 577.5 530.0" stroke="#00ff3c" stroke-width="1"/><path d="M 715.0 470.0 L 580.0 531.2 C 567.5 537.5 560.0 550.0 562.0 567.5 L 591.2 666.2 L 842.5 552.5 C 845.0 551.2 846.2 549.5 846.2 547.5" stroke="#ffee10" stroke-width="1"/><path d="M 813.0 470.0 L 842.5 550.0" stroke="#ffee10" stroke-width="1"/><path d="M 807.5 470.0 L 835.0 555.0" stroke="#00ff3c" stroke-width="1"/><path d="M 820.0 470.0 L 847.5 542.5" stroke="#00ff3c" stroke-width="1"/><path d="M 715.0 470.0 L 845.0 547.5" stroke="#00ff3c" stroke-width="1"/><path d="M 715.0 470.0 L 845.0 547.5" stroke="#ffee10" stroke-width="1" stroke-dasharray="1.5 2.5"/><path d="M 732.5 477.5 L 837.5 542.5" stroke="#00ff3c" stroke-width="1"/><path d="M 842.5 537.5 C 852.5 538.8 858.8 547.5 857.5 557.5 C 855.0 567.5 847.5 571.2 840.0 567.5 C 835.0 562.5 833.8 555.0 835.0 550.0" stroke="#00ff3c" stroke-width="1"/><path d="M 846.2 547.5 C 851.2 550.0 852.5 557.5 850.0 562.5" stroke="#00ff3c" stroke-width="1"/><path d="M 591.2 660.0 L 831.2 556.2" stroke="#00ff3c" stroke-width="1"/><path d="M 597.5 673.8 L 850.0 562.5" stroke="#00ff3c" stroke-width="1"/><path d="M 560.0 683.8 C 572.5 686.2 585.0 683.8 592.5 681.2 L 851.2 568.0" stroke="#ffee10" stroke-width="1"/><path d="M 560.0 655.0 C 567.5 662.5 572.5 670.0 575.0 678.8" stroke="#00ff3c" stroke-width="1"/><path d="M 560.0 670.0 C 565.0 673.8 567.5 677.5 568.8 682.5" stroke="#00ff3c" stroke-width="1"/><path d="M 560.0 590.0 L 582.5 667.5" stroke="#00ff3c" stroke-width="1"/><path d="M 560.0 617.5 L 575.0 670.0" stroke="#00ff3c" stroke-width="1"/><path d="M 575.0 670.0 C 580.0 667.5 585.0 666.2 591.2 666.2" stroke="#00ff3c" stroke-width="1"/><path d="M 591.2 666.2 C 592.5 670.0 595.0 672.5 597.5 673.8" stroke="#00ff3c" stroke-width="1"/><path d="M 732.5 689.2 L 964.5 586.2" stroke="#00ff3c" stroke-width="1"/><path d="M 747.5 689.2 L 964.5 592.5" stroke="#ffee10" stroke-width="1"/><path d="M 865.0 470.0 L 964.5 530.0" stroke="#00ff3c" stroke-width="1"/><path d="M 865.0 470.0 L 964.5 530.0" stroke="#ffee10" stroke-width="1" stroke-dasharray="1.5 3"/><path d="M 560.0 523.8 L 700.0 470.0" stroke="#00ff3c" stroke-width="1"/><path d="M 560.0 515.0 L 677.5 470.0" stroke="#00ff3c" stroke-width="1"/><path d="M 570.0 507.5 L 660.0 470.0" stroke="#00ff3c" stroke-width="1"/><path d="M 560.0 513.8 C 567.5 517.5 572.5 523.8 575.0 531.2" stroke="#00ff3c" stroke-width="1"/><path d="M 560.0 488.8 L 605.0 470.0" stroke="#00ff3c" stroke-width="1"/><path d="M 560.0 485.0 L 595.0 470.0" stroke="#00ff3c" stroke-width="1"/><path d="M 613.2 541.2 C 613.2 532.5 618.8 528.5 623.8 529.5 C 628.0 530.5 630.0 533.8 630.0 537.0 L 654.0 613.0 C 654.5 620.0 650.0 625.5 645.0 625.0 C 640.5 624.2 638.0 621.2 637.0 617.5 Z" stroke="#ffee10" stroke-width="1"/><path d="M 621.2 529.2 C 613.8 528.8 607.5 532.5 607.5 538.8 L 631.2 618.8 C 633.8 623.8 638.8 626.2 645.0 625.5" stroke="#00ff3c" stroke-width="1"/><path d="M 623.8 535.5 L 647.5 616.2" stroke="#00ff3c" stroke-width="1"/><path d="M 607.5 542.5 L 613.2 544.0" stroke="#00ff3c" stroke-width="1"/><path d="M 632.5 619.5 L 638.0 618.0" stroke="#00ff3c" stroke-width="1"/><path d="M 644.4 527.5 C 644.4 518.8 649.9 514.8 654.9 515.8 C 659.1 516.8 661.1 520.0 661.1 523.2 L 685.1 599.2 C 685.6 606.2 681.1 611.8 676.1 611.2 C 671.6 610.5 669.1 607.5 668.1 603.8 Z" stroke="#ffee10" stroke-width="1"/><path d="M 652.4 515.5 C 644.9 515.0 638.6 518.8 638.6 525.0 L 662.4 605.0 C 664.9 610.0 669.9 612.5 676.1 611.8" stroke="#00ff3c" stroke-width="1"/><path d="M 654.9 521.8 L 678.6 602.5" stroke="#00ff3c" stroke-width="1"/><path d="M 638.6 528.8 L 644.4 530.2" stroke="#00ff3c" stroke-width="1"/><path d="M 663.6 605.8 L 669.1 604.2" stroke="#00ff3c" stroke-width="1"/><path d="M 675.5 513.8 C 675.5 505.0 681.0 501.0 686.0 502.0 C 690.2 503.0 692.2 506.2 692.2 509.5 L 716.2 585.5 C 716.8 592.5 712.2 598.0 707.2 597.5 C 702.8 596.8 700.2 593.8 699.2 590.0 Z" stroke="#ffee10" stroke-width="1"/><path d="M 683.5 501.8 C 676.0 501.2 669.8 505.0 669.8 511.2 L 693.5 591.2 C 696.0 596.2 701.0 598.8 707.2 598.0" stroke="#00ff3c" stroke-width="1"/><path d="M 686.0 508.0 L 709.8 588.8" stroke="#00ff3c" stroke-width="1"/><path d="M 669.8 515.0 L 675.5 516.5" stroke="#00ff3c" stroke-width="1"/><path d="M 694.8 592.0 L 700.2 590.5" stroke="#00ff3c" stroke-width="1"/><path d="M 706.6 500.0 C 706.6 491.2 712.1 487.2 717.1 488.2 C 721.4 489.2 723.4 492.5 723.4 495.8 L 747.4 571.8 C 747.9 578.8 743.4 584.2 738.4 583.8 C 733.9 583.0 731.4 580.0 730.4 576.2 Z" stroke="#ffee10" stroke-width="1"/><path d="M 714.6 488.0 C 707.1 487.5 700.9 491.2 700.9 497.5 L 724.6 577.5 C 727.1 582.5 732.1 585.0 738.4 584.2" stroke="#00ff3c" stroke-width="1"/><path d="M 717.1 494.2 L 740.9 575.0" stroke="#00ff3c" stroke-width="1"/><path d="M 700.9 501.2 L 706.6 502.8" stroke="#00ff3c" stroke-width="1"/><path d="M 725.9 578.2 L 731.4 576.8" stroke="#00ff3c" stroke-width="1"/><path d="M 737.8 486.2 C 737.8 477.5 743.2 473.5 748.2 474.5 C 752.5 475.5 754.5 478.8 754.5 482.0 L 778.5 558.0 C 779.0 565.0 774.5 570.5 769.5 570.0 C 765.0 569.2 762.5 566.2 761.5 562.5 Z" stroke="#ffee10" stroke-width="1"/><path d="M 745.8 474.2 C 738.2 473.8 732.0 477.5 732.0 483.8 L 755.8 563.8 C 758.2 568.8 763.2 571.2 769.5 570.5" stroke="#00ff3c" stroke-width="1"/><path d="M 748.2 480.5 L 772.0 561.2" stroke="#00ff3c" stroke-width="1"/><path d="M 732.0 487.5 L 737.8 489.0" stroke="#00ff3c" stroke-width="1"/><path d="M 757.0 564.5 L 762.5 563.0" stroke="#00ff3c" stroke-width="1"/><path d="M 27.5 453.0 L 523.8 752.5 C 540.0 761.2 570.0 765.0 607.5 752.5 L 931.5 606.8" stroke="#ffee10" stroke-width="1"/><path d="M 31.2 445.0 L 525.0 743.8 C 540.0 752.5 570.0 756.2 610.0 743.8 L 916.0 606.8" stroke="#00ff3c" stroke-width="1"/><path d="M 525.0 743.8 L 523.2 752.5" stroke="#00ff3c" stroke-width="1"/><path d="M 610.0 743.8 L 608.0 752.5" stroke="#00ff3c" stroke-width="1"/><path d="M 552.5 677.5 C 562.5 683.8 580.0 687.5 596.2 682.0 L 704.5 633.8" stroke="#ffee10" stroke-width="1"/><path d="M 535.0 570.0 L 560.0 658.8" stroke="#00ff3c" stroke-width="1"/><path d="M 545.0 570.0 L 570.0 656.2" stroke="#00ff3c" stroke-width="1"/><path d="M 555.0 570.0 L 581.2 665.0" stroke="#00ff3c" stroke-width="1"/><path d="M 560.0 658.8 C 558.8 666.2 556.2 671.2 552.5 675.0" stroke="#00ff3c" stroke-width="1"/><path d="M 570.0 656.2 C 567.5 668.8 562.5 675.0 557.5 678.8" stroke="#00ff3c" stroke-width="1"/><path d="M 581.2 665.0 C 577.5 672.5 575.0 678.8 575.0 683.8" stroke="#00ff3c" stroke-width="1"/><path d="M 560.0 660.0 C 572.5 666.2 582.5 667.0 591.2 666.2" stroke="#00ff3c" stroke-width="1"/><path d="M 565.0 670.0 C 577.5 671.2 590.0 672.5 597.5 677.5" stroke="#00ff3c" stroke-width="1"/><path d="M 591.2 661.2 L 704.5 611.2" stroke="#00ff3c" stroke-width="1"/><path d="M 597.5 677.5 L 704.5 628.8" stroke="#00ff3c" stroke-width="1"/><path d="M 512.5 570.0 L 536.2 582.5 C 545.0 581.2 555.0 580.0 562.5 576.2" stroke="#00ff3c" stroke-width="1"/><path d="M 864.5 470.0 L 989.4 544.1 C 994.0 552.7 992.5 563.6 978.4 577.7 C 972.2 582.3 966.0 584.7 959.7 586.2 L 916.0 606.8" stroke="#00ff3c" stroke-width="1"/><path d="M 864.5 470.0 L 989.4 544.1" stroke="#ffee10" stroke-width="1" stroke-dasharray="1.5 3"/><path d="M 989.4 544.1 C 997.2 549.6 1000.3 557.4 998.7 563.6 C 995.6 576.1 981.6 585.5 966.0 591.7 L 931.6 606.8" stroke="#ffee10" stroke-width="1"/><path d="M 959.7 586.2 L 966.0 591.7" stroke="#00ff3c" stroke-width="1"/><path d="M 839.6 537.1 C 850.5 538.7 858.3 544.9 857.5 554.3 C 856.0 562.1 847.4 568.3 841.1 569.9" stroke="#00ff3c" stroke-width="1"/><path d="M 828.7 538.7 C 830.2 551.1 833.3 562.1 841.1 569.9" stroke="#00ff3c" stroke-width="1"/><path d="M 834.9 544.9 C 844.3 546.5 852.1 551.1 853.6 557.4 C 852.8 563.6 847.4 568.3 841.1 571.4" stroke="#ffee10" stroke-width="1"/><path d="M 838.0 551.1 C 842.7 549.6 845.8 548.0 846.6 543.3 L 842.7 537.1" stroke="#00ff3c" stroke-width="1"/><path d="M 502.9 391.0 L 502.9 406.0" stroke="#00ff3c" stroke-width="1"/><path d="M 501.1 352.2 L 492.2 387.8 C 495.0 392.0 505.0 393.5 508.9 391.1 L 501.1 352.2 M 492.2 387.8 C 496.0 385.5 505.0 387.0 508.9 391.1" stroke="#00ff3c" stroke-width="1"/><path d="M 715.0 470.0 L 773.0 443.8" stroke="#ffee10" stroke-width="1"/><path d="M 486.5 242.0 L 552.0 281.0" stroke="#00ff3c" stroke-width="1"/><path d="M 486.5 242.0 L 552.0 281.0" stroke="#ffee10" stroke-width="1" stroke-dasharray="1.5 3"/><path d="M 404.5 372.6 L 360.5 393.3 C 345.0 402.0 333.0 425.0 331.0 447.0 C 331.0 462.0 338.0 470.0 350.0 475.0 L 420.0 517.5" stroke="#00ff3c" stroke-width="1"/><path d="M 434.9 370.0 L 368.5 399.7 C 353.0 408.0 342.0 428.0 340.2 446.0 C 340.0 460.0 347.0 465.0 357.5 467.5 L 430.0 510.0" stroke="#00ff3c" stroke-width="1"/><path d="M 456.7 370.0 L 373.4 407.2 C 361.0 413.0 351.0 428.0 351.0 447.0 C 351.0 455.0 357.0 458.0 365.0 460.0 L 405.0 485.0" stroke="#00ff3c" stroke-width="1"/><path d="M 461.6 370.0 L 374.4 408.7 C 365.0 414.0 358.0 428.0 358.6 449.0 C 360.0 455.0 366.0 455.0 372.5 453.8" stroke="#00ff3c" stroke-width="1"/><path d="M 328.3 371.0 L 360.5 393.3 C 366.0 397.0 371.0 401.0 372.4 405.7" stroke="#00ff3c" stroke-width="1"/><path d="M 327.8 381.9 L 361.5 402.2 C 364.0 404.0 366.0 406.0 366.5 408.7" stroke="#00ff3c" stroke-width="1"/><path d="M 166.2 443.8 L 552.5 677.5" stroke="#ffee10" stroke-width="1"/><path d="M 168.0 443.0 L 552.0 675.0" stroke="#00ff3c" stroke-width="1"/><path d="M 172.0 428.0 L 560.0 658.8" stroke="#00ff3c" stroke-width="1"/><path d="M 178.8 418.0 L 568.8 655.0" stroke="#00ff3c" stroke-width="1"/></g></svg>
<svg class="r" style="left:0;top:0" width="1618" height="878" viewBox="0 0 1618 878"><g transform="translate(71,133)"><circle r="10" fill="none" stroke="#2f7fd6" stroke-width="2"/><path d="M-2.0 4.0L3.0 -0.4" stroke="#2ea62e" stroke-width="1.8"/><path d="M6.0 -3.0L4.4 1.3L1.5 -2.0z" fill="#2ea62e"/></g><g transform="translate(104,133)"><circle r="10" fill="none" stroke="#2f7fd6" stroke-width="2.2"/><circle r="4.5" fill="none" stroke="#8c8c8c" stroke-width="1.8"/><path d="M0.0 0.0L5.5 0.0" stroke="#2ea62e" stroke-width="1.4"/><path d="M9.0 0.0L5.5 1.9L5.5 -1.9z" fill="#2ea62e"/></g><g transform="translate(137,133)"><path d="M-11 -10h12" stroke="#8c8c8c" stroke-width="1.6"/><path d="M1 -10a9 9 0 0 1 9 9" stroke="#2f7fd6" stroke-width="2" fill="none"/><path d="M10 -1v11" stroke="#8c8c8c" stroke-width="1.6"/><path d="M-4.0 2.0L0.5 -2.5" stroke="#2ea62e" stroke-width="2"/><path d="M4.0 -6.0L2.4 -0.5L-1.5 -4.4z" fill="#2ea62e"/></g><g transform="translate(170.5,133)"><circle r="10" fill="none" stroke="#8c8c8c" stroke-width="1.6"/><path d="M-7 -7a10 10 0 0 1 14 0" stroke="#2f7fd6" stroke-width="2.2" fill="none"/><path d="M-5.0 5.0L1.1 -1.1" stroke="#2ea62e" stroke-width="2.2"/><path d="M5.0 -5.0L3.2 1.0L-1.0 -3.2z" fill="#2ea62e"/></g><g transform="translate(203.5,133)"><circle cx="-2" cy="2" r="8.5" fill="none" stroke="#8c8c8c" stroke-width="1.8"/><path d="M-1 -10a10 10 0 0 1 10 9" stroke="#2f7fd6" stroke-width="2" fill="none"/><path d="M-5 5l7-9 l3 2l-7 9z" fill="#b8f0a0" stroke="#2ea62e" stroke-width="1.2"/><path d="M1 -6l5 0l-1 5M-4 8l-4 0l1-5" stroke="#2ea62e" stroke-width="1.6" fill="none"/></g><g transform="translate(237,133)"><circle cx="2" cy="2" r="9" fill="none" stroke="#2f7fd6" stroke-width="2.2"/><path d="M-8 2h20" stroke="#2f7fd6" stroke-width="1.6"/><path d="M-11 -4l15-9" stroke="#8c8c8c" stroke-width="1.6"/></g><g transform="translate(287,133)"><path d="M-10 2c1-14 8-14 10-2c2 12 8 12 10 0" stroke="#2f7fd6" stroke-width="2.2" fill="none" stroke-linecap="round"/><path d="M-5.0 9.0L-0.2 6.3L-3.8 3.6z" fill="#f2d6a0" stroke="#7a4a10" stroke-width=".6"/><path d="M-5.0 9.0L-3.2 7.9L-4.5 6.9z" fill="#222"/><path d="M-0.2 6.3L9.0 -6.3L5.4 -8.9L-3.8 3.6z" fill="#e8952a" stroke="#8a4a10" stroke-width=".6"/><path d="M9.0 -6.3L10.8 -8.7L7.2 -11.3L5.4 -8.9z" fill="#d02828" stroke="#7a1010" stroke-width=".5"/></g><g transform="translate(319,133)"><path d="M-10 2c4-5 10-9 16-10c3 3 4 6 4 9c-6 1-11 5-14 10c-3-3-5-6-6-9z" fill="#eef3fa" stroke="#9aa" stroke-width="1.6"/><path d="M-5 -4c2 4 4 7 7 10M-7 5c5-5 11-8 17-9" stroke="#2f7fd6" stroke-width="2" fill="none"/></g><g transform="translate(352,133)"><path d="M-10 2c4-5 10-9 16-10c3 3 4 6 4 9c-6 1-11 5-14 10c-3-3-5-6-6-9z" fill="#eef3fa" stroke="#2f7fd6" stroke-width="1.6"/><path d="M-3 -6c2 4 4 8 6 11M-8 4c5-5 11-8 17-9" stroke="#7db8ee" stroke-width="1.3" fill="none"/></g><g transform="translate(385,133)"><path d="M-10 4l14-13a4 4 0 0 1 6 6l-14 13a4 4 0 0 1-6-6z" fill="#eef3fa" stroke="#2f7fd6" stroke-width="2"/><ellipse cx="7" cy="-6" rx="3" ry="4.5" transform="rotate(40 7 -6)" fill="none" stroke="#2ea62e" stroke-width="1.4"/><ellipse cx="-7" cy="7" rx="3" ry="4.5" transform="rotate(40 -7 7)" fill="none" stroke="#2ea62e" stroke-width="1.4"/><path d="M-3 3l6-6" stroke="#2ea62e" stroke-width="1.6" stroke-dasharray="3 2"/></g><g transform="translate(418,133)"><path d="M-11 0l10-9l12 3l-8 6zM-9 2l20 2l-6 8z" fill="#eee" stroke="#8c8c8c" stroke-width="1.5"/><path d="M-2 -6l6 10" stroke="#2f7fd6" stroke-width="2.2"/></g><g transform="translate(451,133)"><g transform="translate(1,0)"><path d="M0.0 -8.3L8.5 -4.9L0.0 -1.5L-8.5 -4.9z" fill="#d8d8d4" stroke="#666" stroke-width="0.7" stroke-linejoin="round"/><path d="M-8.5 -4.9L0.0 -1.5L0.0 8.3L-8.5 4.9z" fill="#a0a09c" stroke="#666" stroke-width="0.7" stroke-linejoin="round"/><path d="M0.0 -1.5L8.5 -4.9L8.5 4.9L0.0 8.3z" fill="#bcbcb8" stroke="#666" stroke-width="0.7" stroke-linejoin="round"/></g><path d="M-7 -9l10 2v14l-10-2z" fill="none" stroke="#2f7fd6" stroke-width="1.8"/><path d="M-9.0 8.0L-9.0 3.5" stroke="#1f6ee0" stroke-width="1"/><path d="M-9.0 1.0L-7.6 3.5L-10.4 3.5z" fill="#1f6ee0"/><path d="M-9.0 8.0L-6.1 9.7" stroke="#e02020" stroke-width="1"/><path d="M-4.0 11.0L-6.9 10.9L-5.4 8.5z" fill="#e02020"/></g><g transform="translate(484,133)"><path d="M-11 -5c5-6 15-6 22 0" stroke="#8c8c8c" stroke-width="1.8" fill="none"/><path d="M0.0 -6.0L0.0 -1.0" stroke="#2ea62e" stroke-width="2.2"/><path d="M0.0 4.0L-2.8 -1.0L2.8 -1.0z" fill="#2ea62e"/><path d="M-11 6c5-4 8 3 12 2s6-4 10-1" stroke="#2f7fd6" stroke-width="2.2" fill="none" stroke-linecap="round"/></g><g transform="translate(517,133)"><path d="M-11 -4c5-7 15-7 22 0" stroke="#2f7fd6" stroke-width="2.2" fill="none" stroke-linecap="round"/><path d="M0.0 6.0L0.0 0.0" stroke="#2ea62e" stroke-width="2.2"/><path d="M0.0 -5.0L2.8 0.0L-2.8 0.0z" fill="#2ea62e"/><path d="M-11 7c5-4 8 3 12 2s6-4 10-1" stroke="#8c8c8c" stroke-width="1.8" fill="none"/></g><g transform="translate(550,133)"><path d="M-11 -1l12-10l10 8l-12 12z" fill="#f2eef8" stroke="#2f7fd6" stroke-width="2"/><path d="M-4 3c1-8 4-8 6-3s5 4 5-5" stroke="#c020a0" stroke-width="2" fill="none"/></g><g transform="translate(583,133)"><path d="M-11 -1l12-10l10 8l-12 12z" fill="#dde" stroke="#2f7fd6" stroke-width="2"/><path d="M-3 -5l7 9" stroke="#e02030" stroke-width="2.4"/><path d="M-7 -2l7 9M2 -8l6 8" stroke="#fff" stroke-width="1.4"/></g><g transform="translate(616,133)"><path d="M-8 5c2-9 7-13 13-14" stroke="#2f7fd6" stroke-width="2.4" fill="none"/><path d="M5 -9h7M-9 4l-2 7M-12 5l6 2M5 -11v4" stroke="#8c8c8c" stroke-width="1.6" fill="none"/></g><g transform="translate(648,133)"><path d="M-8 -3h13a3.5 6 0 0 1 0 13h-13a3.5 6 0 0 1 0-13z" fill="#c4c4c0" stroke="#666" stroke-width="1"/><ellipse cx="-8" cy="3.5" rx="3" ry="6.5" fill="#ddd" stroke="#666" stroke-width=".9"/><path d="M-4 -2c2 6 8 6 10 0" stroke="#c020a0" stroke-width="2" fill="none"/><ellipse cx="1" cy="-9" rx="5" ry="3.5" fill="none" stroke="#f4ee00" stroke-width="1.8"/><path d="M1.0 -9.0L1.0 -3.5" stroke="#2ea62e" stroke-width="2.4"/><path d="M1.0 1.0L-1.5 -3.5L3.5 -3.5z" fill="#2ea62e"/></g><g transform="translate(681,133)"><path d="M-11 6l6-14l5 12l4-8l6 10" stroke="#2f7fd6" stroke-width="2.2" fill="none" stroke-linecap="round"/><path d="M-5.0 9.0L-0.2 6.3L-3.8 3.6z" fill="#f2d6a0" stroke="#7a4a10" stroke-width=".6"/><path d="M-5.0 9.0L-3.2 7.9L-4.5 6.9z" fill="#222"/><path d="M-0.2 6.3L9.0 -6.3L5.4 -8.9L-3.8 3.6z" fill="#e8952a" stroke="#8a4a10" stroke-width=".6"/><path d="M9.0 -6.3L10.8 -8.7L7.2 -11.3L5.4 -8.9z" fill="#d02828" stroke="#7a1010" stroke-width=".5"/></g><g transform="translate(715,133)"><ellipse rx="10.5" ry="6" fill="none" stroke="#2f7fd6" stroke-width="2.2"/></g><g transform="translate(748,133)"><ellipse cx="0" cy="-7" rx="7.5" ry="3.4" fill="none" stroke="#2f7fd6" stroke-width="1.9"/><ellipse cx="0" cy="-2" rx="7.5" ry="3.4" fill="none" stroke="#2f7fd6" stroke-width="1.9"/><ellipse cx="0" cy="3" rx="7.5" ry="3.4" fill="none" stroke="#2f7fd6" stroke-width="1.9"/><ellipse cx="0" cy="8" rx="7.5" ry="3.4" fill="none" stroke="#2f7fd6" stroke-width="1.9"/><path d="M-6 -11c2-2 8-2 10 0" stroke="#2f7fd6" stroke-width="1.8" fill="none" stroke-linecap="round"/></g><g transform="translate(781,133)"><path d="M0 0a2.5 2.5 0 0 1 5 0a5 5 0 0 1-10 0a7.5 7.5 0 0 1 15 0a10 10 0 0 1-20 0a11 11 0 0 1 6-10" stroke="#2f7fd6" stroke-width="2" fill="none" stroke-linecap="round"/></g><g transform="translate(831,133)"><path d="M-10 4c0-16 8-16 9-4" stroke="#8c8c8c" stroke-width="2" fill="none"/><path d="M-1 0c1 12 10 12 10 0" stroke="#2f7fd6" stroke-width="2.2" fill="none" stroke-linecap="round"/><path d="M1.0 -8.0L4.0 -2.0" stroke="#2ea62e" stroke-width="2"/><path d="M6.0 2.0L1.8 -0.9L6.2 -3.1z" fill="#2ea62e"/></g><g transform="translate(864,133)"><path d="M-12 -3c4-5 8-3 9 0M1 6c2 4 7 5 11 2" stroke="#2f7fd6" stroke-width="2.2" fill="none" stroke-linecap="round"/><path d="M-5.0 -12.0L-3.2 -8.7" stroke="#30c030" stroke-width="3.6"/><path d="M0.0 -3.0L-6.3 -6.9L-0.0 -10.4z" fill="#30c030"/><path d="M10.0 7.0L7.6 3.4" stroke="#30c030" stroke-width="3.6"/><path d="M4.0 -2.0L10.6 1.4L4.6 5.4z" fill="#30c030"/></g><g transform="translate(897,133)"><path d="M-12 -3c4-5 8-3 9 0M1 6c2 4 7 5 11 2" stroke="#2f7fd6" stroke-width="2.2" fill="none" stroke-linecap="round"/><path d="M-5.0 -12.0L-3.2 -8.7" stroke="#f03030" stroke-width="3.6"/><path d="M0.0 -3.0L-6.3 -6.9L-0.0 -10.4z" fill="#f03030"/><path d="M10.0 7.0L7.6 3.4" stroke="#f03030" stroke-width="3.6"/><path d="M4.0 -2.0L10.6 1.4L4.6 5.4z" fill="#f03030"/></g><g transform="translate(930,133)"><path d="M-9 8c0-22 8-22 9-6c1 10 8 10 9-8" stroke="#2f7fd6" stroke-width="2" fill="none" stroke-linecap="round"/><path d="M-12 8h6M-9 5v6M6 -10h6M9 -13v6M3 10h6M6 7v6M-12 -9h5" stroke="#8c8c8c" stroke-width="1.3"/></g><g transform="translate(964,133)"><path d="M-11 5C-11 -6 -8 -11 -4.500 -9.500C-2 -8 -1 0 0 3C2 10 5 11.500 7 11C10 10 10.600 6 10.600 1.600" stroke="#2f7fd6" stroke-width="2.2" fill="none" stroke-linecap="round"/><g transform="scale(1)"><path d="M-10.400 -1.300L-1.800 -11.600H7.800V-9.600H11V-3.200L8.400 -2.400L5 0.200L0.600 1.900L-2 -1.500L-3.500 -3.500L-9 0.400Z" fill="#eeb860" stroke="#8a5a18" stroke-width=".8" stroke-linejoin="round"/><path d="M-8.800 -1.800L-0.500 -10.300H6.500" stroke="#fce0a0" stroke-width="1.200" fill="none"/><path d="M-1.500 -4.500l3.200 4.300M0.500 -5.500l3.200 4.300M2.500 -6.500l3.200 4.300" stroke="#8a5a18" stroke-width=".7" fill="none"/></g></g><g transform="translate(1013,133)"><rect x="-9" y="-8" width="17" height="17" fill="#f6f2c0" stroke="#f4ee00" stroke-width="2.4"/><rect x="-10.2" y="-9.2" width="19.4" height="19.4" fill="none" stroke="#cdbb00" stroke-width=".6"/><path d="M3 9h6v-6" stroke="#f6f6f0" stroke-width="3" fill="none"/><path d="M-6 0l4 6l8-13" stroke="#3cb43c" stroke-width="3.4" fill="none" stroke-linecap="round"/></g><g transform="translate(1047,133)"><rect x="-9" y="-9" width="18" height="18" fill="#f4f0e6" stroke="#f4ee00" stroke-width="2.4"/><rect x="-10.2" y="-10.2" width="20.4" height="20.4" fill="none" stroke="#cdbb00" stroke-width=".6"/></g><g transform="translate(1080,133)"><rect x="-11" y="-7" width="22" height="14" rx="7" fill="#f4f0e6" stroke="#f4ee00" stroke-width="2.4"/><rect x="-12.2" y="-8.2" width="24.4" height="16.4" rx="8.2" fill="none" stroke="#cdbb00" stroke-width=".6"/></g><g transform="translate(1113,133)"><path d="M-9 -7l10-3l9 8l-6 11l-12-3z" fill="#f4f0e6" stroke="#f4ee00" stroke-width="2.4" stroke-linejoin="round"/></g><g transform="translate(1146,133)"><path d="M-9 -9h12l6 6v12h-18z" fill="#f6f2d8" stroke="#f4ee00" stroke-width="2.4" stroke-linejoin="round"/><path d="M9 1h-6v6h6" fill="#efedf3" stroke="#f4ee00" stroke-width="2"/><path d="M1.0 -2.0L4.4 -6.0" stroke="#c01020" stroke-width="1.6"/><path d="M7.0 -9.0L6.1 -4.5L2.7 -7.4z" fill="#c01020"/></g><g transform="translate(1179,133)"><path d="M-9 -9h12l6 6v12h-18z" fill="#f6f2d8" stroke="#f4ee00" stroke-width="2.4" stroke-linejoin="round"/><path d="M-4 -4h5v5h4v5h-9z" fill="#fff" stroke="#3a3af0" stroke-width="1.6"/></g><g transform="translate(1211,133)"><path d="M-10 -9h12a8 8 0 0 1 8 8v2" fill="none" stroke="#f4ee00" stroke-width="2.4"/><path d="M-10 -9v10" stroke="#f4ee00" stroke-width="2.4"/><g transform="translate(-1,7)"><g transform="scale(1.0)"><path d="M-10.400 -1.300L-1.800 -11.600H7.800V-9.600H11V-3.200L8.400 -2.400L5 0.200L0.600 1.900L-2 -1.500L-3.500 -3.500L-9 0.400Z" fill="#eeb860" stroke="#8a5a18" stroke-width=".8" stroke-linejoin="round"/><path d="M-8.800 -1.800L-0.500 -10.300H6.500" stroke="#fce0a0" stroke-width="1.200" fill="none"/><path d="M-1.500 -4.500l3.200 4.300M0.500 -5.500l3.200 4.300M2.500 -6.500l3.200 4.300" stroke="#8a5a18" stroke-width=".7" fill="none"/></g></g></g><g transform="translate(1244,133)"><rect x="-3" y="-11" width="14" height="14" fill="#f4f0e6" stroke="#f4ee00" stroke-width="2.4"/><rect x="-11" y="-3" width="14" height="14" fill="#e4e0d0" stroke="#f4ee00" stroke-width="2.4"/></g><g transform="translate(1277,133)"><g transform="translate(-3,-5)"><path d="M0.0 -5.4L5.5 -3.2L0.0 -1.0L-5.5 -3.2z" fill="#c8c8c4" stroke="#333" stroke-width="0.6" stroke-linejoin="round"/><path d="M-5.5 -3.2L0.0 -1.0L0.0 5.4L-5.5 3.2z" fill="#6a6a68" stroke="#333" stroke-width="0.6" stroke-linejoin="round"/><path d="M0.0 -1.0L5.5 -3.2L5.5 3.2L0.0 5.4z" fill="#8c8c88" stroke="#333" stroke-width="0.6" stroke-linejoin="round"/></g><path d="M5.0 -4.0L5.0 2.0" stroke="#2ea62e" stroke-width="3"/><path d="M5.0 7.0L2.2 2.0L7.8 2.0z" fill="#2ea62e"/><path d="M-11 8l8-4l8 4l-8 4z" fill="none" stroke="#f4ee00" stroke-width="2"/></g><g transform="translate(1310,133)"><rect x="-8" y="-6" width="16" height="16" fill="#f6f2c0" stroke="#f4ee00" stroke-width="2.4"/><rect x="-9.2" y="-7.2" width="18.4" height="18.4" fill="none" stroke="#cdbb00" stroke-width=".6"/><path d="M2 10h6v-6" stroke="#efedf3" stroke-width="3" fill="none"/><g transform="translate(0,-1)"><g transform="scale(0.95)"><path d="M-5 -5c0-5 10-5 10 0c0 4-5 4-5 8" stroke="#3a78c8" stroke-width="3.4" fill="none" stroke-linecap="round"/><circle cx="0" cy="8.5" r="2.1" fill="#3a78c8"/><path d="M-4.5 -5.5c0-3.5 8-3.5 8 0" stroke="#9cc4f0" stroke-width="1" fill="none"/></g></g></g><g transform="translate(85,18)"><path d="M-10 -4.5h6.4l1.5 2h8.1v8.5h-16z" fill="#f0c040" stroke="#b08018" stroke-width=".7"/><path d="M-10 6l2-6.6000000000000005h16l-2 6.6000000000000005z" fill="#f8dc78" stroke="#b08018" stroke-width=".7"/><path d="M-6 -6l12 14M6 -6l-12 14" stroke="#e01010" stroke-width="2.6"/><path d="M-2 -8c4-5 9-5 11 0l2-2v7h-7l2-2c-2-3-5-3-8-3z" fill="#2eb82e" stroke="#187818" stroke-width=".6"/></g><g transform="translate(115.5,18)"><path d="M-12 -8.5h5.2l1.5 2h6.3v5.5h-13z" fill="#f0c040" stroke="#b08018" stroke-width=".7"/><path d="M-12 -1l2-4.95h13l-2 4.95z" fill="#f8dc78" stroke="#b08018" stroke-width=".7"/><path d="M-12 2.5h5.2l1.5 2h6.3v5.5h-13z" fill="#f0c040" stroke="#b08018" stroke-width=".7"/><path d="M-12 10l2-4.95h13l-2 4.95z" fill="#f8dc78" stroke="#b08018" stroke-width=".7"/><path d="M2 -7h6l3 3v11h-9z" fill="#fff" stroke="#888" stroke-width=".8"/><path d="M-2 -9c3-2 6-2 8 0M-2 9c3 2 6 2 8 0" stroke="#2eb82e" stroke-width="1.5" fill="none"/></g><g transform="translate(147,18)"><rect x="-10" y="-10" width="20" height="20" fill="#4a6eb4" stroke="#2a4684" stroke-width="1"/><rect x="-7.5" y="-9" width="15" height="10.0" fill="#fff"/><rect x="-7.5" y="-9" width="15" height="3.2" fill="#e03030"/><path d="M-6.5 -3.3999999999999995h13M-6.5 -1.0h13" stroke="#aaa" stroke-width=".7"/><rect x="-6" y="2.8000000000000007" width="12" height="6.199999999999999" fill="#d8d8e0" stroke="#555" stroke-width=".5"/><rect x="-4.5" y="4.0" width="2.5" height="4.4" fill="#3a66b4"/></g><g transform="translate(178,18)"><rect x="-3" y="-11" width="15" height="14" fill="#4a6eb4" stroke="#2a4684" stroke-width="1"/><rect x="-0.5" y="-10" width="10" height="7.0" fill="#fff"/><rect x="-0.5" y="-10" width="10" height="2.24" fill="#e03030"/><path d="M0.5 -6.38h8M0.5 -4.7h8" stroke="#aaa" stroke-width=".7"/><rect x="1" y="-2.039999999999999" width="7" height="4.04" fill="#d8d8e0" stroke="#555" stroke-width=".5"/><rect x="2.5" y="-1.200000000000001" width="2.5" height="3.08" fill="#3a66b4"/><rect x="-11" y="-3" width="15" height="14" fill="#4a6eb4" stroke="#2a4684" stroke-width="1"/><rect x="-8.5" y="-2" width="10" height="7.0" fill="#fff"/><rect x="-8.5" y="-2" width="10" height="2.24" fill="#e03030"/><path d="M-7.5 1.62h8M-7.5 3.3h8" stroke="#aaa" stroke-width=".7"/><rect x="-7" y="5.960000000000001" width="7" height="4.04" fill="#d8d8e0" stroke="#555" stroke-width=".5"/><rect x="-5.5" y="6.799999999999999" width="2.5" height="3.08" fill="#3a66b4"/></g><g transform="translate(209.5,18)"><rect x="-11" y="-12" width="13" height="12" fill="#4a6eb4" stroke="#2a4684" stroke-width="1"/><rect x="-8.5" y="-11" width="8" height="6.0" fill="#fff"/><rect x="-8.5" y="-11" width="8" height="1.92" fill="#e03030"/><path d="M-7.5 -8.04h6M-7.5 -6.6h6" stroke="#aaa" stroke-width=".7"/><rect x="-7" y="-4.32" width="5" height="3.3200000000000003" fill="#d8d8e0" stroke="#555" stroke-width=".5"/><rect x="-5.5" y="-3.6000000000000014" width="2.5" height="2.64" fill="#3a66b4"/><g transform="translate(4,5)"><path d="M0.0 -5.4L5.5 -3.2L0.0 -1.0L-5.5 -3.2z" fill="#d0d0cc" stroke="#333" stroke-width="0.6" stroke-linejoin="round"/><path d="M-5.5 -3.2L0.0 -1.0L0.0 5.4L-5.5 3.2z" fill="#777" stroke="#333" stroke-width="0.6" stroke-linejoin="round"/><path d="M0.0 -1.0L5.5 -3.2L5.5 3.2L0.0 5.4z" fill="#999" stroke="#333" stroke-width="0.6" stroke-linejoin="round"/></g><path d="M3 -9c4-1 7 1 7 5l2-1l-3 5l-4-4l2 0c0-2-2-3-4-3z" fill="#2eb82e"/></g><g transform="translate(240,18)"><path d="M-11 2h22v8h-22z" fill="#e8e8e8" stroke="#777" stroke-width="1"/><path d="M-7 2v-11h14v11" fill="#fff" stroke="#777" stroke-width="1"/><path d="M-8 7h16" stroke="#999" stroke-width="1.4"/><path d="M0.0 0.0L0.0 -5.0" stroke="#2eb82e" stroke-width="3"/><path d="M0.0 -10.0L2.8 -5.0L-2.8 -5.0z" fill="#2eb82e"/></g><g transform="translate(272,18)"><circle r="12" fill="#4a9a3a" stroke="#2a6a22" stroke-width="1"/><circle r="9.500" fill="#7a9a78" stroke="#9ad07a" stroke-width="1.4"/><path d="M-4.85 2.8499999999999996L-10.35 8.35" stroke="#888" stroke-width="3" stroke-linecap="round"/><circle cx="-1" cy="-1" r="5.5" fill="#d6e6f7" stroke="#c8d8e8" stroke-width="2"/><path d="M-3.75 -2.1A3.0250000000000004 3.0250000000000004 0 0 1 -0.44999999999999996 -4.025" stroke="#fff" stroke-width="1.2" fill="none"/></g><g transform="translate(303,18)"><path d="M-9 -1l8-8v5c8 0 11 5 9 13c-1-5-4-7-9-7v5z" fill="#a4a8b0" stroke="#6a6a6a" stroke-width=".6"/></g><g transform="translate(332.5,18)"><g transform="scale(-1,1)"><path d="M-9 -1l8-8v5c8 0 11 5 9 13c-1-5-4-7-9-7v5z" fill="#a4a8b0" stroke="#6a6a6a" stroke-width=".6"/></g></g><g transform="translate(362.5,18)"><path d="M0 -3l6-7v4c6 0 9 4 7 12c-1-5-3-6-7-6v4z" fill="#5a8ee0" stroke="#2a5ab0" stroke-width=".6"/><path d="M-10 -2h8M-10 11h8M-9 -2c0 5 6 5 6 13M-3 -2c0 5-6 5-6 13" stroke="#c8a040" stroke-width="1.6" fill="#f0e0a0"/></g><g transform="translate(389,18)"><path d="M-4 -3h8M-4 -0.5h8l-4 4.5z" stroke="#111" stroke-width="1" fill="#111"/></g><rect x="398" y="4" width="1" height="26" fill="#3c4c6c"/><rect x="76" y="198" width="31" height="29" fill="#b4b4b4"/><rect x="109" y="198" width="31" height="29" fill="#b4b4b4"/><rect x="144" y="198" width="31" height="29" fill="#b4b4b4"/><rect x="179" y="198" width="31" height="29" fill="#b4b4b4"/><rect x="214" y="198" width="31" height="29" fill="#b4b4b4"/><rect x="249" y="198" width="31" height="29" fill="#b4b4b4"/><rect x="284" y="198" width="31" height="29" fill="#b4b4b4"/><rect x="319" y="198" width="31" height="29" fill="#b4b4b4"/><rect x="354" y="198" width="31" height="29" fill="#b4b4b4"/><rect x="389" y="198" width="31" height="29" fill="#b4b4b4"/><g transform="translate(91.5,211.8)"><path d="M-13 -5h7M-14 -1h7M-13 3h6M-11 7l6-3" stroke="#8a9ab0" stroke-width="1.6"/><path d="M-2.25 4.25L-9.75 11.75" stroke="#888" stroke-width="3" stroke-linecap="round"/><circle cx="3" cy="-1" r="7.5" fill="#d6e6f7" stroke="#7a96b8" stroke-width="2"/><path d="M-0.75 -2.5A4.125 4.125 0 0 1 3.75 -5.125" stroke="#fff" stroke-width="1.2" fill="none"/></g><g transform="translate(124.5,211.8)"><g transform="translate(0,1)"><g transform="scale(1.15)"><path d="M-11 3l9-6l13 4l-9 7z" fill="#e4e8ee" stroke="#9aa" stroke-width=".7"/><path d="M-3.0 3.0L-3.0 -7.0" stroke="#1f6ee0" stroke-width="2"/><path d="M-3.0 -12.0L-0.2 -7.0L-5.8 -7.0z" fill="#1f6ee0"/><path d="M-3.0 3.0L4.8 -2.2" stroke="#2eaa2e" stroke-width="1.8"/><path d="M9.0 -5.0L6.4 0.1L3.3 -4.5z" fill="#2eaa2e"/><path d="M-3.0 3.0L3.8 7.3" stroke="#e02020" stroke-width="2"/><path d="M8.0 10.0L2.3 9.6L5.3 5.0z" fill="#e02020"/><circle cx="-3" cy="3" r="2" fill="#eee" stroke="#555" stroke-width=".6"/></g></g></g><g transform="translate(159.5,211.8)"><path d="M0.0 -11.2L0.0 1.8M-11.3 6.5L0.0 1.8M0.0 1.8L11.3 6.5" stroke="#111" stroke-width="1.6" fill="none" stroke-linejoin="round"/><path d="M0.0 -11.2L11.3 -6.5L0.0 -1.8L-11.3 -6.5z" fill="#5fd23c"/><path d="M0.0 -11.2L11.3 -6.5M11.3 -6.5L0.0 -1.8M0.0 -1.8L-11.3 -6.5M-11.3 -6.5L0.0 -11.2M-11.3 -6.5L-11.3 6.5M11.3 -6.5L11.3 6.5M0.0 -1.8L0.0 11.2M-11.3 6.5L0.0 11.2M0.0 11.2L11.3 6.5" stroke="#111" stroke-width="1.6" fill="none" stroke-linejoin="round" stroke-linecap="round"/></g><g transform="translate(194.5,211.8)"><path d="M0.0 -11.2L0.0 1.8M-11.3 6.5L0.0 1.8M0.0 1.8L11.3 6.5" stroke="#111" stroke-width="1.6" fill="none" stroke-linejoin="round"/><path d="M0.0 1.8L11.3 6.5L0.0 11.2L-11.3 6.5z" fill="#5fd23c"/><path d="M0.0 -11.2L11.3 -6.5M11.3 -6.5L0.0 -1.8M0.0 -1.8L-11.3 -6.5M-11.3 -6.5L0.0 -11.2M-11.3 -6.5L-11.3 6.5M11.3 -6.5L11.3 6.5M0.0 -1.8L0.0 11.2M-11.3 6.5L0.0 11.2M0.0 11.2L11.3 6.5" stroke="#111" stroke-width="1.6" fill="none" stroke-linejoin="round" stroke-linecap="round"/></g><g transform="translate(229.5,211.8)"><path d="M0.0 -11.2L0.0 1.8M-11.3 6.5L0.0 1.8M0.0 1.8L11.3 6.5" stroke="#111" stroke-width="1.6" fill="none" stroke-linejoin="round"/><path d="M-11.3 -6.5L0.0 -11.2L0.0 1.8L-11.3 6.5z" fill="#4cc030"/><path d="M0.0 -11.2L11.3 -6.5M11.3 -6.5L0.0 -1.8M0.0 -1.8L-11.3 -6.5M-11.3 -6.5L0.0 -11.2M-11.3 -6.5L-11.3 6.5M11.3 -6.5L11.3 6.5M0.0 -1.8L0.0 11.2M-11.3 6.5L0.0 11.2M0.0 11.2L11.3 6.5" stroke="#111" stroke-width="1.6" fill="none" stroke-linejoin="round" stroke-linecap="round"/></g><g transform="translate(264.5,211.8)"><path d="M0.0 -11.2L0.0 1.8M-11.3 6.5L0.0 1.8M0.0 1.8L11.3 6.5" stroke="#111" stroke-width="1.6" fill="none" stroke-linejoin="round"/><path d="M0.0 -1.8L11.3 -6.5L11.3 6.5L0.0 11.2z" fill="#7ae050"/><path d="M0.0 -11.2L11.3 -6.5M11.3 -6.5L0.0 -1.8M0.0 -1.8L-11.3 -6.5M-11.3 -6.5L0.0 -11.2M-11.3 -6.5L-11.3 6.5M11.3 -6.5L11.3 6.5M0.0 -1.8L0.0 11.2M-11.3 6.5L0.0 11.2M0.0 11.2L11.3 6.5" stroke="#111" stroke-width="1.6" fill="none" stroke-linejoin="round" stroke-linecap="round"/></g><g transform="translate(299.5,211.8)"><path d="M0.0 -11.2L0.0 1.8M-11.3 6.5L0.0 1.8M0.0 1.8L11.3 6.5" stroke="#111" stroke-width="1.6" fill="none" stroke-linejoin="round"/><path d="M-11.3 -6.5L0.0 -1.8L0.0 11.2L-11.3 6.5z" fill="#4cc030"/><path d="M0.0 -11.2L11.3 -6.5M11.3 -6.5L0.0 -1.8M0.0 -1.8L-11.3 -6.5M-11.3 -6.5L0.0 -11.2M-11.3 -6.5L-11.3 6.5M11.3 -6.5L11.3 6.5M0.0 -1.8L0.0 11.2M-11.3 6.5L0.0 11.2M0.0 11.2L11.3 6.5" stroke="#111" stroke-width="1.6" fill="none" stroke-linejoin="round" stroke-linecap="round"/></g><g transform="translate(334.5,211.8)"><path d="M0.0 -11.2L0.0 1.8M-11.3 6.5L0.0 1.8M0.0 1.8L11.3 6.5" stroke="#111" stroke-width="1.6" fill="none" stroke-linejoin="round"/><path d="M0.0 -11.2L11.3 -6.5L11.3 6.5L0.0 1.8z" fill="#6ad846"/><path d="M0.0 -11.2L11.3 -6.5M11.3 -6.5L0.0 -1.8M0.0 -1.8L-11.3 -6.5M-11.3 -6.5L0.0 -11.2M-11.3 -6.5L-11.3 6.5M11.3 -6.5L11.3 6.5M0.0 -1.8L0.0 11.2M-11.3 6.5L0.0 11.2M0.0 11.2L11.3 6.5" stroke="#111" stroke-width="1.6" fill="none" stroke-linejoin="round" stroke-linecap="round"/></g><g transform="translate(369.5,211.8)"><path d="M0.0 -11.0L11.3 -6.5L0.0 -2.0L-11.3 -6.5z" fill="#8ee85a" stroke="#2a8a1a" stroke-width="0.8" stroke-linejoin="round"/><path d="M-11.3 -6.5L0.0 -2.0L0.0 11.0L-11.3 6.5z" fill="#3fae2a" stroke="#2a8a1a" stroke-width="0.8" stroke-linejoin="round"/><path d="M0.0 -2.0L11.3 -6.5L11.3 6.5L0.0 11.0z" fill="#5fd040" stroke="#2a8a1a" stroke-width="0.8" stroke-linejoin="round"/><path d="M14 9v5h-5z" fill="#111"/></g><g transform="translate(404.5,211.8)"><g transform="translate(3,-3)"><path d="M0.0 -7.0L0.0 1.1M-7.0 4.0L0.0 1.1M0.0 1.1L7.0 4.0" stroke="#111" stroke-width="1.1" fill="none" stroke-linejoin="round"/><path d="M-7.0 -4.0L0.0 -1.1L0.0 7.0L-7.0 4.0z" fill="#4cc030"/><path d="M0.0 -7.0L7.0 -4.0M7.0 -4.0L0.0 -1.1M0.0 -1.1L-7.0 -4.0M-7.0 -4.0L0.0 -7.0M-7.0 -4.0L-7.0 4.0M7.0 -4.0L7.0 4.0M0.0 -1.1L0.0 7.0M-7.0 4.0L0.0 7.0M0.0 7.0L7.0 4.0" stroke="#111" stroke-width="1.1" fill="none" stroke-linejoin="round" stroke-linecap="round"/></g><path d="M-13.0 -4.0L-7.0 -4.0" stroke="#e02020" stroke-width="2.6"/><path d="M-2.0 -4.0L-7.0 -1.2L-7.0 -6.8z" fill="#e02020"/><path d="M-10 -4h5" stroke="#ffe020" stroke-width="1.2"/><path d="M-4 3v8M-9 11.500h11" stroke="#c01818" stroke-width="2.4"/></g><rect x="4" y="300" width="31" height="31" fill="#b4b4b4"/><rect x="4" y="336" width="31" height="31" fill="#b4b4b4"/><rect x="4" y="371" width="31" height="31" fill="#c9b070" stroke="#d8c070" stroke-width="1"/><rect x="4" y="406" width="31" height="31" fill="#b4b4b4"/><g transform="translate(19.5,315)"><path d="M-6 -8v15a6 3 0 0 0 12 0v-15" fill="#3a66d0" stroke="#1a3a90" stroke-width="1.2"/><ellipse cx="0" cy="-8" rx="6" ry="3" fill="#6a90e8" stroke="#1a3a90" stroke-width="1.2"/></g><g transform="translate(19.5,352)"><path d="M-6 -8v15a6 3 0 0 0 12 0v-15" fill="#c8e4f8" stroke="#40c8f0" stroke-width="1.2"/><ellipse cx="0" cy="-8" rx="6" ry="3" fill="#e0f0fc" stroke="#40c8f0" stroke-width="1.2"/><path d="M15 10v5h-5z" fill="#111"/></g><g transform="translate(19.5,387)"><path d="M-6 -8v15a6 3 0 0 0 12 0v-15" fill="#b8c8e8" stroke="#222" stroke-width="1.2"/><ellipse cx="0" cy="-8" rx="6" ry="3" fill="#e8e8f0" stroke="#222" stroke-width="1.2"/><path d="M-2 -5v14M2 -5v14" stroke="#e8d040" stroke-width="1.6"/></g><g transform="translate(19.5,421)"><g transform="translate(-5,-5)"><path d="M0.0 -4.9L5.0 -2.9L0.0 -0.9L-5.0 -2.9z" fill="#ddd" stroke="#222" stroke-width="0.7" stroke-linejoin="round"/><path d="M-5.0 -2.9L0.0 -0.9L0.0 4.9L-5.0 2.9z" fill="#888" stroke="#222" stroke-width="0.7" stroke-linejoin="round"/><path d="M0.0 -0.9L5.0 -2.9L5.0 2.9L0.0 4.9z" fill="#aaa" stroke="#222" stroke-width="0.7" stroke-linejoin="round"/></g><g transform="translate(5,-6)"><path d="M0.0 -4.5L0.0 0.7M-4.5 2.6L0.0 0.7M0.0 0.7L4.5 2.6" stroke="#222" stroke-width="0.8" fill="none" stroke-linejoin="round"/><path d="M0.0 -4.5L4.5 -2.6M4.5 -2.6L0.0 -0.7M0.0 -0.7L-4.5 -2.6M-4.5 -2.6L0.0 -4.5M-4.5 -2.6L-4.5 2.6M4.5 -2.6L4.5 2.6M0.0 -0.7L0.0 4.5M-4.5 2.6L0.0 4.5M0.0 4.5L4.5 2.6" stroke="#222" stroke-width="0.8" fill="none" stroke-linejoin="round" stroke-linecap="round"/></g><path d="M-11.5 7h9.0M-7 2.5v9.0" stroke="#58c838" stroke-width="2.6" stroke-linecap="round"/><path d="M2 4c3-3 8-1 8 3c0 3-3 5-6 3" stroke="#2f7fd6" stroke-width="2" fill="none"/><path d="M15 10v5h-5z" fill="#111"/></g><g transform="translate(1038.5,237) scale(1.04)"><path d="M-11 -5l5-6h15v15l-5 6h-15z" fill="#f4f6fa" stroke="#3a66a8" stroke-width="2.2" stroke-linejoin="round"/><path d="M-11 -5h15v15M4 -5l5-6" stroke="#3a66a8" stroke-width="2" fill="none"/><path d="M2.5 -9h11.0M8 -14.5v11.0" stroke="#4cc04c" stroke-width="2.6" stroke-linecap="round"/><path d="M14 9v5h-5z" fill="#111"/></g><g transform="translate(1038.5,271) scale(1.04)"><path d="M-11 0v10h20v-10" fill="none" stroke="#777" stroke-width="2.4"/><path d="M-8 1v6h14v-6" fill="none" stroke="#bbb" stroke-width="1.4"/><circle cx="-3" cy="-10" r="2.6" fill="#f0b020"/><path d="M-7 -6h8l-2 11h-4z" fill="#4a8ad8" stroke="#2a5aa8" stroke-width=".6"/><path d="M2.5 -8h11.0M8 -13.5v11.0" stroke="#4cc04c" stroke-width="2.6" stroke-linecap="round"/><path d="M14 9v5h-5z" fill="#111"/></g><g transform="translate(1038.5,305) scale(1.04)"><path d="M-12 -8h9v6h6v10h-6v6h-9z" fill="#efedf3" stroke="#f4ee00" stroke-width="3" stroke-linejoin="round"/><path d="M-13.500 -9.500h12v6h6v13h-6v6h-12z" fill="none" stroke="#cdbb00" stroke-width=".6"/><path d="M2.5 -9h11.0M8 -14.5v11.0" stroke="#4cc04c" stroke-width="2.6" stroke-linecap="round"/><path d="M9 6a4 4 0 0 1 4 4c0 2-2 3-2 6h-4c0-3-2-4-2-6a4 4 0 0 1 4-4z" fill="#f8b818" stroke="#b07808" stroke-width=".6"/></g><g transform="translate(1038.5,339) scale(1.04)"><g transform="translate(-2,1)"><rect x="-2.600" y="-12" width="5.200" height="24" rx="1" transform="rotate(0)" fill="#c4c4c4" stroke="#6a6a6a" stroke-width="1"/><rect x="-2.600" y="-12" width="5.200" height="24" rx="1" transform="rotate(45)" fill="#c4c4c4" stroke="#6a6a6a" stroke-width="1"/><rect x="-2.600" y="-12" width="5.200" height="24" rx="1" transform="rotate(90)" fill="#c4c4c4" stroke="#6a6a6a" stroke-width="1"/><rect x="-2.600" y="-12" width="5.200" height="24" rx="1" transform="rotate(135)" fill="#c4c4c4" stroke="#6a6a6a" stroke-width="1"/><circle r="8" fill="#c4c4c4" stroke="#6a6a6a" stroke-width="1"/><circle r="6.800" fill="#c4c4c4"/><circle r="3.600" fill="#efedf3" stroke="#6a6a6a" stroke-width="1"/></g><path d="M2.5 -9h11.0M8 -14.5v11.0" stroke="#4cc04c" stroke-width="2.6" stroke-linecap="round"/><path d="M14 9v5h-5z" fill="#111"/></g><g transform="translate(1038.5,373) scale(1.04)"><path d="M-12 13l5-6h17l-5 6z" fill="#3a78b8"/><path d="M-7.0 9.0L-7.0 -5.0" stroke="#1a2a7a" stroke-width="3"/><path d="M-7.0 -12.0L-3.1 -5.0L-10.9 -5.0z" fill="#1a2a7a"/><path d="M1.5 -8h11.0M7 -13.5v11.0" stroke="#4cc04c" stroke-width="2.6" stroke-linecap="round"/></g><g transform="translate(1038.5,408) scale(1.04)"><circle r="12" fill="#f4f6fa" stroke="#3a66a8" stroke-width="2"/><path d="M-9 0l17-8l-5 17l-3-8z" fill="#f03020" stroke="#801010" stroke-width=".8"/><path d="M14 9v5h-5z" fill="#111"/></g><g transform="translate(1038.5,441) scale(1.04)"><rect x="-12" y="-6" width="21" height="17" rx="3" fill="#f8f0e0" stroke="#f0a030" stroke-width="2.4"/><rect x="-8" y="-1" width="9" height="4" fill="#f0a030"/><path d="M2.5 -9h11.0M8 -14.5v11.0" stroke="#4cc04c" stroke-width="2.6" stroke-linecap="round"/><path d="M14 9v5h-5z" fill="#111"/></g><g transform="translate(1038.5,476) scale(1.04)"><path d="M-10 -11h20l-7 10v12l-6-3v-9z" fill="#f4f0ec" stroke="#7a5a40" stroke-width="1.8" stroke-linejoin="round"/><path d="M14 9v5h-5z" fill="#111"/></g><g transform="translate(1038.5,510) scale(1.04)"><path d="M-10 10l17-17" stroke="#1a2a7a" stroke-width="4.500" stroke-linecap="round"/><path d="M5 -5l6-6" stroke="#4a9ae0" stroke-width="4" stroke-linecap="round"/><path d="M-4 -4l13 13" stroke="#4a9ae0" stroke-width="4.500" stroke-linecap="round"/><path d="M-3 -11a6 6 0 1 0 0 11" stroke="#4a9ae0" stroke-width="3" fill="none"/></g><g transform="translate(1602,185)"><path d="M-6 0h12l6 6v8h-18z" fill="#f4f6fa" stroke="#333" stroke-width="1"/><rect x="-3" y="7" width="7" height="5" fill="#fff" stroke="#555" stroke-width=".7"/><path d="M-12 -8.5h6.800000000000001l1.5 2h8.7v9.5h-17z" fill="#f0c860" stroke="#b08018" stroke-width=".7"/><path d="M-12 3l2-7.15h17l-2 7.15z" fill="#f8dc78" stroke="#b08018" stroke-width=".7"/><path d="M-3 -11c4-4 9-4 11 0l2-2v7h-7l2-2c-2-3-5-3-8-3z" fill="#2eb82e" stroke="#187818" stroke-width=".5"/></g><g transform="translate(1602,219)"><g transform="scale(1.05)"><path d="M-11 3l9-6l13 4l-9 7z" fill="#e4e8ee" stroke="#9aa" stroke-width=".7"/><path d="M-3.0 3.0L-3.0 -7.0" stroke="#1f6ee0" stroke-width="2"/><path d="M-3.0 -12.0L-0.2 -7.0L-5.8 -7.0z" fill="#1f6ee0"/><path d="M-3.0 3.0L4.8 -2.2" stroke="#2eaa2e" stroke-width="1.8"/><path d="M9.0 -5.0L6.4 0.1L3.3 -4.5z" fill="#2eaa2e"/><path d="M-3.0 3.0L3.8 7.3" stroke="#e02020" stroke-width="2"/><path d="M8.0 10.0L2.3 9.6L5.3 5.0z" fill="#e02020"/><circle cx="-3" cy="3" r="2" fill="#eee" stroke="#555" stroke-width=".6"/></g></g><rect x="1587.500" y="238" width="31" height="31" fill="#ffe173" stroke="#f0c850" stroke-width="1"/><g transform="translate(1602,253.5)"><path d="M-12 -11l3 20" stroke="#333" stroke-width="2.5"/><circle cx="2" cy="-2" r="6.500" fill="none" stroke="#a06030" stroke-width="1.8"/><circle cx="2" cy="-2" r="1.8" fill="#a06030"/><path d="M2 -13v22M-9 -2h22M-6 -10l16 16M10 -10l-16 16" stroke="#a06030" stroke-width="1.2"/><path d="M-10 8l8-4M-7 11l10-5M-3 13l10-5M2 14l8-4M-8 6l12 7" stroke="#f08010" stroke-width="2"/></g><g transform="translate(1525,213)"><path d="M-11 0l9-8v5h5c6 0 8 3 8 12h-6c0-5-1-6-3-6h-4v5z" fill="#8c8c8c"/></g><g transform="translate(1551,213)"><g transform="scale(-1,1)"><path d="M-11 0l9-8v5h5c6 0 8 3 8 12h-6c0-5-1-6-3-6h-4v5z" fill="#a8a8a8"/></g></g><g transform="translate(1099,241)"><circle cx="0" cy="-4.500" r="4.600" fill="#fad8a0" stroke="#e0b070" stroke-width=".6"/><path d="M-9 9c0-7 4-8 9-8s9 1 9 8z" fill="#3a6ad0"/><path d="M-4 1.500v7.500M4 1.500v7.500" stroke="#1a2a7a" stroke-width="1.6"/><path d="M-4 3h8v6h-8z" fill="#5a9ae8"/></g><g transform="translate(1128,265.5)"><path d="M-10.500 -6h8l2 2.500h11v9.500a1.500 1.500 0 0 1-1.500 1.500h-18a1.500 1.500 0 0 1-1.500-1.500z" fill="#fdf6e8" stroke="#e8a030" stroke-width="1.8" stroke-linejoin="round"/><path d="M-7 -2h6" stroke="#e8a030" stroke-width="2"/></g><g transform="translate(1127,289.5)"><path d="M-5 -5l5-4h5l-2 5l5-1l3 5l-6 7h-12v-9z" fill="#dfeaf8" stroke="#5a8ac8" stroke-width="1.6" stroke-linejoin="round"/><rect x="-12" y="-9" width="5" height="11" rx="2" fill="#555"/><circle cx="-9.500" cy="-6.500" r="2" fill="#20e020"/><circle cx="-9.500" cy="-1" r="2" fill="#f0d020"/></g><g transform="translate(1127,313.5)"><path d="M-9 -3l4-5h6l-1 4l5-5h5v11l-5 6h-14z" fill="#f8e8e8" stroke="#a01818" stroke-width="1.8" stroke-linejoin="round"/><path d="M-9 2h15l5-5M6 2v7" stroke="#a01818" stroke-width="1.4" fill="none"/><rect x="-12" y="-9" width="5" height="11" rx="2" fill="#555"/><circle cx="-9.500" cy="-6.500" r="2" fill="#20e020"/><circle cx="-9.500" cy="-1" r="2" fill="#f0d020"/></g><g transform="translate(574,824)"><g transform="translate(1,0)"><g transform="rotate(-35)"><g transform="scale(0.9)"><path d="M-10.400 -1.300L-1.800 -11.600H7.800V-9.600H11V-3.200L8.400 -2.400L5 0.200L0.600 1.900L-2 -1.500L-3.500 -3.500L-9 0.400Z" fill="#eeb860" stroke="#8a5a18" stroke-width=".8" stroke-linejoin="round"/><path d="M-8.800 -1.800L-0.500 -10.300H6.500" stroke="#fce0a0" stroke-width="1.200" fill="none"/><path d="M-1.500 -4.500l3.200 4.300M0.500 -5.500l3.200 4.300M2.500 -6.500l3.200 4.300" stroke="#8a5a18" stroke-width=".7" fill="none"/></g></g></g><ellipse cx="-3" cy="8" rx="6" ry="2.500" fill="none" stroke="#555" stroke-width="1.4"/><path d="M-5 0l0 7M-1 1v6" stroke="#a07030" stroke-width="1.6"/></g><g transform="translate(614.5,824)"><rect x="-10" y="-10" width="20" height="20" fill="#e8dede" stroke="#8a8a8a" stroke-width="2"/><path d="M-6 -2c1-6 9-7 12-2l2-1l-1 6l-6-2l2-1c-2-3-6-2-7 1zM6 3c-1 6-9 7-12 2l-2 1l1-6l6 2l-2 1c2 3 6 2 7-1z" fill="#e84858" stroke="#a01828" stroke-width=".5"/></g><g transform="translate(654.5,824)"><rect x="-11" y="-11" width="22" height="22" fill="#fce068"/><path d="M-9 -8l10-2l5 8l-9 5z" fill="#9a4ab0" stroke="#5a2a70" stroke-width=".6"/><path d="M-6 -9l3 3l4-2l-2 4l3 3l-4 0l-2 4l-1-4l-4-1l3-2z" fill="#f8d020"/><path d="M0 0l9 5l-4 1l3 5l-2 1l-3-5l-3 3z" fill="#c8d0e0" stroke="#555" stroke-width=".7"/></g><g transform="translate(694.5,824)"><g transform="translate(2,-2)"><g transform="scale(0.85)"><path d="M-10.400 -1.300L-1.800 -11.600H7.800V-9.600H11V-3.200L8.400 -2.400L5 0.200L0.600 1.900L-2 -1.500L-3.500 -3.500L-9 0.400Z" fill="#eeb860" stroke="#8a5a18" stroke-width=".8" stroke-linejoin="round"/><path d="M-8.800 -1.800L-0.500 -10.300H6.500" stroke="#fce0a0" stroke-width="1.200" fill="none"/><path d="M-1.500 -4.500l3.200 4.300M0.500 -5.500l3.200 4.300M2.500 -6.500l3.200 4.300" stroke="#8a5a18" stroke-width=".7" fill="none"/></g></g><path d="M-7 0h12v10h-12z" fill="#d8e8fa" stroke="#4a7ac8" stroke-width="1"/><circle cx="-3" cy="6" r="2.200" fill="none" stroke="#2a5ac8" stroke-width="1.4"/><circle cx="2" cy="4" r="1.800" fill="none" stroke="#2a5ac8" stroke-width="1.2"/></g><g transform="translate(734.5,824)"><ellipse cx="1" cy="11" rx="8" ry="2" fill="#c8c8c8"/><g transform="translate(0,-2)"><g transform="scale(1.0)"><path d="M-5 -5c0-5 10-5 10 0c0 4-5 4-5 8" stroke="#3a78c8" stroke-width="3.4" fill="none" stroke-linecap="round"/><circle cx="0" cy="8.5" r="2.1" fill="#3a78c8"/><path d="M-4.5 -5.5c0-3.5 8-3.5 8 0" stroke="#9cc4f0" stroke-width="1" fill="none"/></g></g></g><g transform="translate(774.5,824)"><path d="M-12 0l12-7l12 7l-12 7z" fill="#a8a820" stroke="#f4f000" stroke-width="2.400" stroke-linejoin="round"/></g><g transform="translate(814.5,824)"><rect x="-8.500" y="-8.500" width="17" height="17" fill="#f4f4f8" stroke="#3a5ac8" stroke-width="1.800"/><path d="M2 -8.500v6.500h6.500" stroke="#e02030" stroke-width="1.300" fill="none"/><circle cx="-8.500" cy="-8.500" r="1.700" fill="#e02030"/><circle cx="8.500" cy="-8.500" r="1.700" fill="#e02030"/><circle cx="8.500" cy="8.500" r="1.700" fill="#e02030"/><circle cx="-8.500" cy="8.500" r="1.700" fill="#e02030"/></g><g transform="translate(854.5,824)"><g transform="translate(-3,-4)"><path d="M0.0 -5.8L6.0 -3.4L0.0 -1.0L-6.0 -3.4z" fill="#8ab0f0" stroke="#2a4a98" stroke-width="0.6" stroke-linejoin="round"/><path d="M-6.0 -3.4L0.0 -1.0L0.0 5.8L-6.0 3.4z" fill="#4a70c8" stroke="#2a4a98" stroke-width="0.6" stroke-linejoin="round"/><path d="M0.0 -1.0L6.0 -3.4L6.0 3.4L0.0 5.8z" fill="#6a90e0" stroke="#2a4a98" stroke-width="0.6" stroke-linejoin="round"/></g><g transform="translate(5,4)"><path d="M0.0 -5.4L5.5 -3.2L0.0 -1.0L-5.5 -3.2z" fill="#bbb" stroke="#222" stroke-width="0.6" stroke-linejoin="round"/><path d="M-5.5 -3.2L0.0 -1.0L0.0 5.4L-5.5 3.2z" fill="#666" stroke="#222" stroke-width="0.6" stroke-linejoin="round"/><path d="M0.0 -1.0L5.5 -3.2L5.5 3.2L0.0 5.4z" fill="#888" stroke="#222" stroke-width="0.6" stroke-linejoin="round"/></g><path d="M-11.0 5.0L-5.0 5.0" stroke="#e01020" stroke-width="2.4"/><path d="M0.0 5.0L-5.0 7.8L-5.0 2.2z" fill="#e01020"/></g><g transform="translate(894.5,824)"><rect x="-11" y="-11" width="22" height="22" fill="#fce068"/><path d="M0.0 -7.8L8.0 -4.6L0.0 -1.4L-8.0 -4.6z" fill="#e030d0" stroke="#3a5ab0" stroke-width="1.2" stroke-linejoin="round"/><path d="M-8.0 -4.6L0.0 -1.4L0.0 7.8L-8.0 4.6z" fill="#a8a860" stroke="#3a5ab0" stroke-width="1.2" stroke-linejoin="round"/><path d="M0.0 -1.4L8.0 -4.6L8.0 4.6L0.0 7.8z" fill="#c8c880" stroke="#3a5ab0" stroke-width="1.2" stroke-linejoin="round"/></g><g transform="translate(934.5,824)"><rect x="-6" y="-11" width="12" height="5" fill="#e8e8e4" stroke="#777" stroke-width="1"/><rect x="-6" y="-5" width="12" height="5" fill="#d09850" stroke="#777" stroke-width="1"/><rect x="-6" y="1" width="12" height="5" fill="#e8e8e4" stroke="#777" stroke-width="1"/><rect x="-6" y="7" width="12" height="4" fill="#e8e8e4" stroke="#777" stroke-width="1"/></g><g transform="translate(974.5,824)"><path d="M-3 -8a8.500 8.500 0 1 1-6 6" stroke="#1a8a1a" stroke-width="3" fill="none"/><path d="M-3 -13v10l-7-5z" fill="#1a8a1a"/><path d="M-3 1h6M0 -2v6" stroke="#2a2ac8" stroke-width="1.800"/></g><g transform="translate(1014.5,824)"><rect x="-10" y="-10" width="20" height="20" fill="#f4f4f8" stroke="#777" stroke-width="1.600"/><path d="M0 -10v20M-10 0h20" stroke="#444" stroke-width="1.800"/></g><g transform="translate(1060,801)"><path d="M-1.5 1.5L-6.5 6.5" stroke="#888" stroke-width="3" stroke-linecap="round"/><circle cx="2" cy="-2" r="5" fill="#d6e6f7" stroke="#5a8ac8" stroke-width="2"/><path d="M-0.5 -3.0A2.75 2.75 0 0 1 2.5 -4.75" stroke="#fff" stroke-width="1.2" fill="none"/></g><g transform="translate(1594.5,801)"><circle r="8" fill="#1838c8"/><path d="M-5 -5c3-3 7-2 8 0c-1 3-3 2-4 5c-2 1-4-2-4-5zM2 2c3-1 5 0 5 2c-1 3-4 4-5 2z" fill="#30c030"/><path d="M-4 -5a5 4 0 0 1 6-1" stroke="#9ac8f8" stroke-width="1.200" fill="none"/></g><path d="M16 852.500l6.500-1v6.500h-6.500zM23.500 851.300l8.500-1.300v8h-8.500zM16 859h6.500v6.500l-6.500-1zM23.500 859h8.500v8l-8.500-1.300z" fill="#fff"/><circle cx="70.500" cy="855.500" r="5.500" fill="none" stroke="#222" stroke-width="1.500"/><path d="M66.500 860l-6 6.500" stroke="#222" stroke-width="1.600"/><ellipse cx="296" cy="874" rx="26" ry="14" fill="#c0b8f0" opacity=".7"/><path d="M277 878c0-7 4-10 19-10s19 3 19 10z" fill="#4a2a6a"/><rect x="288" y="846" width="16" height="20" rx="3" fill="#8ab84a"/><rect x="287" y="844" width="18" height="6" rx="1" fill="#3a2a4a"/><circle cx="292.500" cy="855" r="1.500" fill="#fff"/><circle cx="299.500" cy="855" r="1.500" fill="#fff"/><path d="M293 861h6" stroke="#3a4a1a" stroke-width="1"/><path d="M268 844l8 4l-3 1l7 5l-10-3l3-1zM324 844l-8 4l3 1l-7 5l10-3l-3-1z" fill="#f8a820"/><path d="M353 854.500h9.500v7h-9.500zM353 854.500v-3.500h9.500v3.500M353 861.500v3.500h9.500v-3.500M366.500 852v4.500M366.500 860v4.500" stroke="#fff" stroke-width="1.2" fill="none"/><path d="M399 849h8l2 2.500h13v15h-23z" fill="#f8c838"/><path d="M399 854h23v12.500h-23z" fill="#fcd860"/><path d="M404 860h13v6.500h-13z" fill="#3a8ae0"/><path d="M407 863h7v3.500h-7z" fill="#fcd860"/><rect x="448" y="846" width="24" height="24" rx="5" fill="#b2e04c"/><path d="M460 849.500l4.500 8.500l-4.500 8.500l-4.500-8.500z" fill="#111"/><path d="M451.500 858l2.500-2v4z" fill="#111"/><path d="M468.500 858l-2.500-2v4z" fill="#333"/><path d="M1375.500 861l5.500-5.500l5.500 5.500" stroke="#fff" stroke-width="1.300" fill="none"/><rect x="1401" y="853.500" width="7.500" height="8" rx="2" fill="none" stroke="#fff" stroke-width="1.100"/><path d="M1408.500 856.500l3-1.500v5.500l-3-1.500M1402 851.500c2-1.500 5-1.500 7 0M1402 864c2 1.500 5 1.500 7 0" stroke="#fff" stroke-width="1" fill="none"/><path d="M1422 855.500h2.500l3.500-3.500v12l-3.500-3.500h-2.500z" fill="none" stroke="#fff" stroke-width="1.100"/><path d="M1430.500 855a4 4 0 0 1 0 6M1433 853a7 7 0 0 1 0 10M1435.500 851.500a9.500 9.500 0 0 1 0 13" stroke="#fff" stroke-width="1" fill="none"/><path d="M1449.500 853.500h11.500v8h-11.500zM1453 865.500h5M1455.500 861.500v4M1445.500 852.500h3v6h-3z" stroke="#fff" stroke-width="1.100" fill="none"/><path d="M1578 849.500h15.500v11.500h-10l-3 3v-3h-2.500z" fill="#fff"/><path d="M1580.500 853h10.500M1580.500 855.500h10.500M1580.500 858h7" stroke="#1c2a44" stroke-width="1"/><circle cx="1593" cy="865.500" r="7.500" fill="#2a3040" stroke="#888" stroke-width="1"/><rect x="854.500" y="731.500" width="148" height="52" fill="none" stroke="#fff" stroke-width="1"/><path d="M503.8 495.6V427.8" stroke="#18a4b4" stroke-width="2.4"/><polygon points="498.7,428.2 508.9,428.2 503.6,417.3" fill="#28bccc"/><path d="M508.2 496.0L544.4 479.6" stroke="#1ea41e" stroke-width="3"/><polygon points="541.6,473.3 545.1,484.0 554.9,476.9" fill="#2cb82c"/><path d="M517.8 493.3L525.6 489.3M523.6 492.4L531.3 488.0M529.3 491.6L537.1 486.7M535.1 490.7L542.9 485.3M540.9 489.8L548.7 484.0M546.7 488.9L554.4 482.7" stroke="#20f040" stroke-width="1"/><path d="M506.7 498.2L524.4 509.3" stroke="#c82020" stroke-width="2.6"/><polygon points="528.2,504.9 521.6,512.9 534.4,514.7" fill="#d83030"/><circle cx="504.4" cy="497.3" r="3.2" fill="#8c8c8c" stroke="#5a5a5a" stroke-width=".6"/><polygon points="77.6,714.6 100.2,706.2 118.6,716.8 99.0,725.7" fill="#8e8e44" stroke="none"/><polyline points="100.2,706.2 118.6,716.8 99.0,725.7" fill="none" stroke="#f0e818" stroke-width="1"/><polygon points="74.7,689.0 97.3,677.9 98.6,706.6 75.9,714.6" fill="rgba(150,150,150,.55)" stroke="#d0d0d0" stroke-width=".8"/><polygon points="74.7,689.0 94.4,699.7 94.4,724.2 75.6,716.3" fill="rgba(140,140,140,.5)" stroke="#d0d0d0" stroke-width=".8"/><path d="M71.6 712.6V646.8" stroke="#10a4b4" stroke-width="3.6"/><path d="M71.0 712.6V646.8" stroke="#40d0dc" stroke-width="1"/><polygon points="66.2,646.8 77.1,646.8 71.3,635.3" fill="#20d0e0"/><path d="M78.5 713.4L112.6 700.1" stroke="#10a810" stroke-width="3"/><polygon points="110.4,695.1 113.2,704.4 123.4,694.6" fill="#18c018"/><path d="M76.8 717.4L94.7 727.6" stroke="#e01010" stroke-width="3.2"/><polygon points="97.3,724.2 91.3,731.7 101.9,732.4" fill="#f01818"/><circle cx="73.3" cy="716.0" r="4.3" fill="#707070" stroke="#484848" stroke-width=".6"/><circle cx="72.1" cy="714.8" r="1.5" fill="#999"/><rect x="-2" y="7" width="78" height="310" rx="3" fill="#efedf3"/><path d="M0 317.3h73.500" stroke="#a8aec2" stroke-width="1.4" fill="none"/><g transform="translate(19,25)"><path d="M-12 -6h7M-13 -2h7M-12 2h6M-10 6l6-3" stroke="#9ab" stroke-width="1.6"/><path d="M-2.25 4.25L-9.75 11.75" stroke="#888" stroke-width="3" stroke-linecap="round"/><circle cx="3" cy="-1" r="7.5" fill="#d6e6f7" stroke="#8aa6c8" stroke-width="2"/><path d="M-0.75 -2.5A4.125 4.125 0 0 1 3.75 -5.125" stroke="#fff" stroke-width="1.2" fill="none"/></g><g transform="translate(53,25)"><path d="M-10 -9l5 5M-2 -1l5 5M6 7l4 4M-12 0l4 4M-4 8l3 3" stroke="#2f7fd6" stroke-width="2"/><path d="M-7.0 9.0L-2.0 6.8L-5.4 3.8z" fill="#f2d6a0" stroke="#7a4a10" stroke-width=".6"/><path d="M-7.0 9.0L-5.1 8.0L-6.3 7.0z" fill="#222"/><path d="M-2.0 6.8L8.7 -5.3L5.3 -8.3L-5.4 3.8z" fill="#e8952a" stroke="#8a4a10" stroke-width=".6"/><path d="M8.7 -5.3L10.7 -7.5L7.3 -10.5L5.3 -8.3z" fill="#d02828" stroke="#7a1010" stroke-width=".5"/><path d="M6.5 -13h7l-3.5 3.5z" fill="#111"/></g><g transform="translate(19,59.5)"><rect x="-8" y="-7" width="16" height="14" fill="#dce6f6" stroke="#555" stroke-width="1"/><path d="M-12 -11l5 0M-12 -11l0 5M-12 -11l6 6" stroke="#2eaa2e" stroke-width="1.8"/><path d="M-12 11l5 0M-12 11l0 -5M-12 11l6 -6" stroke="#2eaa2e" stroke-width="1.8"/><path d="M12 -11l-5 0M12 -11l0 5M12 -11l-6 6" stroke="#2eaa2e" stroke-width="1.8"/><path d="M12 11l-5 0M12 11l0 -5M12 11l-6 -6" stroke="#2eaa2e" stroke-width="1.8"/></g><g transform="translate(53,59.5)"><path d="M-11 -4c4-7 12-2 8 5c-2 5 8 10 12 2c2-5-4-8-8-4" stroke="#2f7fd6" stroke-width="2.2" fill="none" stroke-linecap="round"/><path d="M-6.0 9.0L-1.0 6.8L-4.4 3.8z" fill="#f2d6a0" stroke="#7a4a10" stroke-width=".6"/><path d="M-6.0 9.0L-4.1 8.0L-5.3 7.0z" fill="#222"/><path d="M-1.0 6.8L9.7 -5.3L6.3 -8.3L-4.4 3.8z" fill="#e8952a" stroke="#8a4a10" stroke-width=".6"/><path d="M9.7 -5.3L11.7 -7.5L8.3 -10.5L6.3 -8.3z" fill="#d02828" stroke="#7a1010" stroke-width=".5"/><path d="M6.5 -13h7l-3.5 3.5z" fill="#111"/></g><g transform="translate(19,94)"><path d="M-13 -9h5M-10.5 -11.5v5M-13 -4h5" stroke="#d03030" stroke-width="1.2"/><path d="M-5.25 2.25L-12.75 9.75" stroke="#888" stroke-width="3" stroke-linecap="round"/><circle cx="0" cy="-3" r="7.5" fill="#d6e6f7" stroke="#8a96a8" stroke-width="2"/><path d="M-3.75 -4.5A4.125 4.125 0 0 1 0.75 -7.125" stroke="#fff" stroke-width="1.2" fill="none"/><g transform="translate(6,7)"><path d="M0.0 -5.4L5.5 -3.2L0.0 -1.0L-5.5 -3.2z" fill="#c8c8c4" stroke="#222" stroke-width="0.6" stroke-linejoin="round"/><path d="M-5.5 -3.2L0.0 -1.0L0.0 5.4L-5.5 3.2z" fill="#666" stroke="#222" stroke-width="0.6" stroke-linejoin="round"/><path d="M0.0 -1.0L5.5 -3.2L5.5 3.2L0.0 5.4z" fill="#888" stroke="#222" stroke-width="0.6" stroke-linejoin="round"/></g><path d="M6.5 -13h7l-3.5 3.5z" fill="#111"/></g><g transform="translate(53,94)"><rect x="-9" y="-9" width="18" height="18" fill="#f6f2c0" stroke="#f4ee00" stroke-width="2.4"/><rect x="-10.2" y="-10.2" width="20.4" height="20.4" fill="none" stroke="#cdbb00" stroke-width=".6"/><path d="M4 9h5v-5" stroke="#efedf3" stroke-width="3" fill="none"/><path d="M-6 0l4 6l8-13" stroke="#3cb43c" stroke-width="3.4" fill="none" stroke-linecap="round"/><path d="M6.5 -13h7l-3.5 3.5z" fill="#111"/></g><g transform="translate(19,128)"><g transform="scale(1.05)"><path d="M-11 3l9-6l13 4l-9 7z" fill="#e4e8ee" stroke="#9aa" stroke-width=".7"/><path d="M-3.0 3.0L-3.0 -7.0" stroke="#1f6ee0" stroke-width="2"/><path d="M-3.0 -12.0L-0.2 -7.0L-5.8 -7.0z" fill="#1f6ee0"/><path d="M-3.0 3.0L4.8 -2.2" stroke="#2eaa2e" stroke-width="1.8"/><path d="M9.0 -5.0L6.4 0.1L3.3 -4.5z" fill="#2eaa2e"/><path d="M-3.0 3.0L3.8 7.3" stroke="#e02020" stroke-width="2"/><path d="M8.0 10.0L2.3 9.6L5.3 5.0z" fill="#e02020"/><circle cx="-3" cy="3" r="2" fill="#eee" stroke="#555" stroke-width=".6"/></g><path d="M6.5 -13h7l-3.5 3.5z" fill="#111"/></g><g transform="translate(53,128)"><path d="M-11 -2c1-12 8-12 10 0c2 12 8 12 11 0" stroke="#2f7fd6" stroke-width="2.2" fill="none" stroke-linecap="round"/><path d="M-5.0 9.0L-0.2 6.3L-3.8 3.6z" fill="#f2d6a0" stroke="#7a4a10" stroke-width=".6"/><path d="M-5.0 9.0L-3.2 7.9L-4.5 6.9z" fill="#222"/><path d="M-0.2 6.3L9.0 -6.3L5.4 -8.9L-3.8 3.6z" fill="#e8952a" stroke="#8a4a10" stroke-width=".6"/><path d="M9.0 -6.3L10.8 -8.7L7.2 -11.3L5.4 -8.9z" fill="#d02828" stroke="#7a1010" stroke-width=".5"/><path d="M6.5 -13h7l-3.5 3.5z" fill="#111"/></g><g transform="translate(19,162)"><path d="M-10 -10h14M-11 -7h16M-10 -4h14" stroke="#5a78c8" stroke-width="2.2"/><ellipse cx="-1" cy="5" rx="10" ry="6.5" fill="#d8a070" stroke="#7a4a20" stroke-width=".9"/><circle cx="-5" cy="6" r="2" fill="#e02020"/><circle cx="0" cy="8" r="2" fill="#2a50e0"/><circle cx="5" cy="6" r="2" fill="#20b020"/><path d="M2 2l9-12" stroke="#8a5a20" stroke-width="2"/><path d="M6.5 -13h7l-3.5 3.5z" fill="#111"/></g><g transform="translate(53,162)"><path d="M-5 -9l15-3l-4 18l-16 4z" fill="#9cc4f4" stroke="#2f7fd6" stroke-width="1.8"/><path d="M2 -10.500l-5 19M-7.500 -1l16-3.500" stroke="#fff" stroke-width="1.6"/><path d="M6.5 -13h7l-3.5 3.5z" fill="#111"/></g><g transform="translate(19,196)"><path d="M-9 -2c1-8 12-10 16-3l3-2l-1 9l-8-3l3-2c-3-4-9-3-10 2z" fill="#6aa4ec" stroke="#2a64c0" stroke-width=".8"/><path d="M9 3c-1 8-12 10-16 3l-3 2l1-9l8 3l-3 2c3 4 9 3 10-2z" fill="#6aa4ec" stroke="#2a64c0" stroke-width=".8"/><path d="M6.5 -13h7l-3.5 3.5z" fill="#111"/></g><g transform="translate(53,196)"><path d="M0.0 -9.3L9.5 -5.5L0.0 -1.7L-9.5 -5.5z" fill="#d4d4d0" stroke="#333" stroke-width="0.8" stroke-linejoin="round"/><path d="M-9.5 -5.5L0.0 -1.7L0.0 9.3L-9.5 5.5z" fill="#6e6e6a" stroke="#333" stroke-width="0.8" stroke-linejoin="round"/><path d="M0.0 -1.7L9.5 -5.5L9.5 5.5L0.0 9.3z" fill="#94948f" stroke="#333" stroke-width="0.8" stroke-linejoin="round"/><path d="M6.5 -13h7l-3.5 3.5z" fill="#111"/></g><g transform="translate(19,230)"><g transform="translate(0,-1)"><g transform="scale(1.15)"><path d="M-5 -5c0-5 10-5 10 0c0 4-5 4-5 8" stroke="#3a78c8" stroke-width="3.4" fill="none" stroke-linecap="round"/><circle cx="0" cy="8.5" r="2.1" fill="#3a78c8"/><path d="M-4.5 -5.5c0-3.5 8-3.5 8 0" stroke="#9cc4f0" stroke-width="1" fill="none"/></g></g><path d="M6.5 -13h7l-3.5 3.5z" fill="#111"/></g><g transform="translate(53,230)"><path d="M-10 -8v19M10 -8v19" stroke="#777" stroke-width="1.8"/><path d="M0.0 -4.0L-5.0 -4.0" stroke="#e8d800" stroke-width="2.4"/><path d="M-10.0 -4.0L-5.0 -6.8L-5.0 -1.2z" fill="#e8d800"/><path d="M0.0 -4.0L5.0 -4.0" stroke="#e8d800" stroke-width="2.4"/><path d="M10.0 -4.0L5.0 -1.2L5.0 -6.8z" fill="#e8d800"/><path d="M6.5 -13h7l-3.5 3.5z" fill="#111"/></g><g transform="translate(19,264)"><path d="M-8 -6h16l-2 17h-12z" fill="#a8d0f0" stroke="#3a78b8" stroke-width="1.2"/><path d="M-9 -7h18" stroke="#3a78b8" stroke-width="2.4"/><path d="M-3 -9l3-4l3 4z" fill="#f0d000" stroke="#806000" stroke-width=".6"/><path d="M-4 -2l5 5l-5 5M4 -2l-5 5l5 5" stroke="#c8e87a" stroke-width="1.4" fill="none"/><path d="M6.5 -13h7l-3.5 3.5z" fill="#111"/></g><g transform="translate(53,264)"><path d="M-9 -1l8-8v5c8 0 11 5 9 13c-1-5-4-7-9-7v5z" fill="#9a9a9a" stroke="#6a6a6a" stroke-width=".6"/><path d="M6.5 -13h7l-3.5 3.5z" fill="#111"/></g><g transform="translate(19,298)"><path d="M-12 -11l3 20" stroke="#333" stroke-width="2.5"/><path d="M-10 -11l3 18" stroke="#8ac" stroke-width="1.5"/><circle cx="2" cy="-2" r="6.5" fill="none" stroke="#a06030" stroke-width="1.8"/><circle cx="2" cy="-2" r="1.8" fill="#a06030"/><path d="M2 -13v22M-9 -2h22M-6 -10l16 16M10 -10l-16 16" stroke="#a06030" stroke-width="1.2"/><path d="M-10 8l8-4M-7 11l10-5M-3 13l10-5M2 14l8-4M-8 6l12 7" stroke="#f08010" stroke-width="2"/><path d="M6.5 -13h7l-3.5 3.5z" fill="#111"/></g><g transform="translate(53,298)"><path d="M-8 0h14l6 6v8h-20z" fill="#f4f6fa" stroke="#333" stroke-width="1"/><rect x="-5" y="7" width="7" height="5" fill="#fff" stroke="#555" stroke-width=".7"/><path d="M-12 -7.5h6.800000000000001l1.5 2h8.7v9.5h-17z" fill="#f0c860" stroke="#b08018" stroke-width=".7"/><path d="M-12 4l2-7.15h17l-2 7.15z" fill="#f8dc78" stroke="#b08018" stroke-width=".7"/><path d="M-3 -10c4-4 9-4 11 0l2-2v7h-7l2-2c-2-3-5-3-8-3z" fill="#2eb82e" stroke="#187818" stroke-width=".5"/></g></svg>
<div class="t" style="left:1590.00px;top:858.69px;font-size:11px;line-height:14px;letter-spacing:-0.118px;color:#fff;">2</div>
<div class="t" style="left:859.00px;top:735.80px;font-size:15px;line-height:20px;letter-spacing:0.056px;color:#fff;">9 - CAM highlight</div>
<div class="t" style="left:859.00px;top:757.80px;font-size:15px;line-height:20px;letter-spacing:0.171px;color:#fff;">0 - Feature highlight</div>
<div class="t" style="left:499.80px;top:402.60px;font-size:13px;line-height:17px;letter-spacing:-0.441px;color:#fff;">Z</div>
<div class="t" style="left:535.30px;top:511.00px;font-size:13px;line-height:17px;letter-spacing:0.129px;color:#fff;">X</div>
<div class="t" style="left:557.00px;top:465.82px;font-size:11.5px;line-height:15px;letter-spacing:0.330px;color:#f01818;">Y</div>
<div class="t" style="left:67.00px;top:619.62px;font-size:13.5px;line-height:18px;letter-spacing:-0.246px;color:#fff;">Z</div>
<div class="t" style="left:103.40px;top:729.82px;font-size:13.5px;line-height:18px;letter-spacing:-0.004px;color:#fff;">X</div>
<div class="t" style="left:125.30px;top:683.62px;font-size:13.5px;line-height:18px;letter-spacing:-0.504px;color:#f01818;">Y</div>
</body></html>
